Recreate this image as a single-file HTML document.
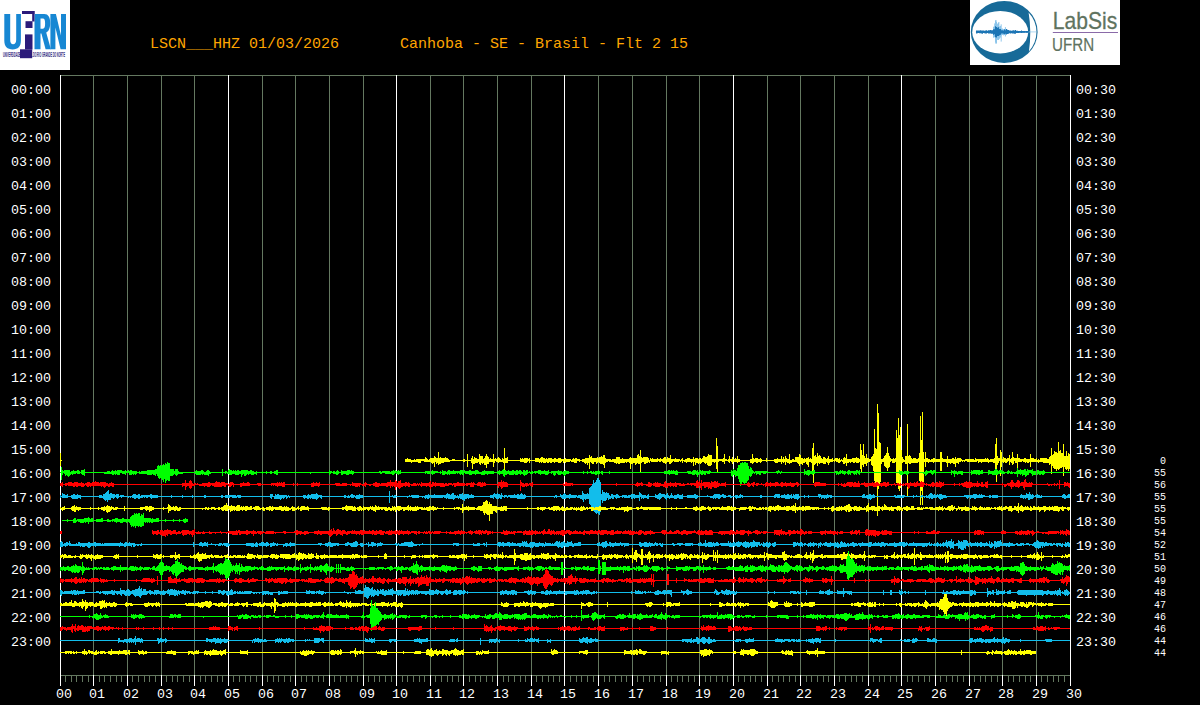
<!DOCTYPE html>
<html lang="en">
<head>
<meta charset="utf-8">
<title>LSCN HHZ helicorder</title>
<style>
html,body{margin:0;padding:0;background:#000;}
body{width:1200px;height:705px;overflow:hidden;font-family:"Liberation Sans",sans-serif;}
svg{display:block;position:absolute;left:0;top:0;}
.tl span{position:absolute;white-space:pre;line-height:1.15;color:transparent;}
</style>
</head>
<body>
<svg role="img" aria-label="Helicorder LSCN HHZ 01/03/2026 - Canhoba - SE - Brasil" width="1200" height="705" viewBox="0 0 1200 705" shape-rendering="crispEdges">
<rect x="0" y="0" width="1200" height="705" fill="#000000"/>
<rect x="60" y="75" width="1011" height="1" fill="#647860"/>
<rect x="60" y="675" width="1011" height="1" fill="#647860"/>
<rect x="65" y="675" width="1" height="7" fill="#647860"/>
<rect x="71" y="675" width="1" height="7" fill="#647860"/>
<rect x="76" y="675" width="1" height="7" fill="#647860"/>
<rect x="82" y="675" width="1" height="7" fill="#647860"/>
<rect x="88" y="675" width="1" height="7" fill="#647860"/>
<rect x="99" y="675" width="1" height="7" fill="#647860"/>
<rect x="104" y="675" width="1" height="7" fill="#647860"/>
<rect x="110" y="675" width="1" height="7" fill="#647860"/>
<rect x="116" y="675" width="1" height="7" fill="#647860"/>
<rect x="121" y="675" width="1" height="7" fill="#647860"/>
<rect x="132" y="675" width="1" height="7" fill="#647860"/>
<rect x="138" y="675" width="1" height="7" fill="#647860"/>
<rect x="144" y="675" width="1" height="7" fill="#647860"/>
<rect x="149" y="675" width="1" height="7" fill="#647860"/>
<rect x="155" y="675" width="1" height="7" fill="#647860"/>
<rect x="166" y="675" width="1" height="7" fill="#647860"/>
<rect x="172" y="675" width="1" height="7" fill="#647860"/>
<rect x="177" y="675" width="1" height="7" fill="#647860"/>
<rect x="183" y="675" width="1" height="7" fill="#647860"/>
<rect x="189" y="675" width="1" height="7" fill="#647860"/>
<rect x="200" y="675" width="1" height="7" fill="#647860"/>
<rect x="205" y="675" width="1" height="7" fill="#647860"/>
<rect x="211" y="675" width="1" height="7" fill="#647860"/>
<rect x="217" y="675" width="1" height="7" fill="#647860"/>
<rect x="222" y="675" width="1" height="7" fill="#647860"/>
<rect x="233" y="675" width="1" height="7" fill="#647860"/>
<rect x="239" y="675" width="1" height="7" fill="#647860"/>
<rect x="245" y="675" width="1" height="7" fill="#647860"/>
<rect x="250" y="675" width="1" height="7" fill="#647860"/>
<rect x="256" y="675" width="1" height="7" fill="#647860"/>
<rect x="267" y="675" width="1" height="7" fill="#647860"/>
<rect x="273" y="675" width="1" height="7" fill="#647860"/>
<rect x="278" y="675" width="1" height="7" fill="#647860"/>
<rect x="284" y="675" width="1" height="7" fill="#647860"/>
<rect x="290" y="675" width="1" height="7" fill="#647860"/>
<rect x="301" y="675" width="1" height="7" fill="#647860"/>
<rect x="306" y="675" width="1" height="7" fill="#647860"/>
<rect x="312" y="675" width="1" height="7" fill="#647860"/>
<rect x="318" y="675" width="1" height="7" fill="#647860"/>
<rect x="323" y="675" width="1" height="7" fill="#647860"/>
<rect x="334" y="675" width="1" height="7" fill="#647860"/>
<rect x="340" y="675" width="1" height="7" fill="#647860"/>
<rect x="346" y="675" width="1" height="7" fill="#647860"/>
<rect x="351" y="675" width="1" height="7" fill="#647860"/>
<rect x="357" y="675" width="1" height="7" fill="#647860"/>
<rect x="368" y="675" width="1" height="7" fill="#647860"/>
<rect x="374" y="675" width="1" height="7" fill="#647860"/>
<rect x="379" y="675" width="1" height="7" fill="#647860"/>
<rect x="385" y="675" width="1" height="7" fill="#647860"/>
<rect x="391" y="675" width="1" height="7" fill="#647860"/>
<rect x="402" y="675" width="1" height="7" fill="#647860"/>
<rect x="407" y="675" width="1" height="7" fill="#647860"/>
<rect x="413" y="675" width="1" height="7" fill="#647860"/>
<rect x="419" y="675" width="1" height="7" fill="#647860"/>
<rect x="424" y="675" width="1" height="7" fill="#647860"/>
<rect x="435" y="675" width="1" height="7" fill="#647860"/>
<rect x="441" y="675" width="1" height="7" fill="#647860"/>
<rect x="447" y="675" width="1" height="7" fill="#647860"/>
<rect x="452" y="675" width="1" height="7" fill="#647860"/>
<rect x="458" y="675" width="1" height="7" fill="#647860"/>
<rect x="469" y="675" width="1" height="7" fill="#647860"/>
<rect x="475" y="675" width="1" height="7" fill="#647860"/>
<rect x="480" y="675" width="1" height="7" fill="#647860"/>
<rect x="486" y="675" width="1" height="7" fill="#647860"/>
<rect x="492" y="675" width="1" height="7" fill="#647860"/>
<rect x="503" y="675" width="1" height="7" fill="#647860"/>
<rect x="508" y="675" width="1" height="7" fill="#647860"/>
<rect x="514" y="675" width="1" height="7" fill="#647860"/>
<rect x="520" y="675" width="1" height="7" fill="#647860"/>
<rect x="525" y="675" width="1" height="7" fill="#647860"/>
<rect x="536" y="675" width="1" height="7" fill="#647860"/>
<rect x="542" y="675" width="1" height="7" fill="#647860"/>
<rect x="548" y="675" width="1" height="7" fill="#647860"/>
<rect x="553" y="675" width="1" height="7" fill="#647860"/>
<rect x="559" y="675" width="1" height="7" fill="#647860"/>
<rect x="570" y="675" width="1" height="7" fill="#647860"/>
<rect x="576" y="675" width="1" height="7" fill="#647860"/>
<rect x="581" y="675" width="1" height="7" fill="#647860"/>
<rect x="587" y="675" width="1" height="7" fill="#647860"/>
<rect x="593" y="675" width="1" height="7" fill="#647860"/>
<rect x="604" y="675" width="1" height="7" fill="#647860"/>
<rect x="609" y="675" width="1" height="7" fill="#647860"/>
<rect x="615" y="675" width="1" height="7" fill="#647860"/>
<rect x="621" y="675" width="1" height="7" fill="#647860"/>
<rect x="626" y="675" width="1" height="7" fill="#647860"/>
<rect x="637" y="675" width="1" height="7" fill="#647860"/>
<rect x="643" y="675" width="1" height="7" fill="#647860"/>
<rect x="649" y="675" width="1" height="7" fill="#647860"/>
<rect x="654" y="675" width="1" height="7" fill="#647860"/>
<rect x="660" y="675" width="1" height="7" fill="#647860"/>
<rect x="671" y="675" width="1" height="7" fill="#647860"/>
<rect x="677" y="675" width="1" height="7" fill="#647860"/>
<rect x="682" y="675" width="1" height="7" fill="#647860"/>
<rect x="688" y="675" width="1" height="7" fill="#647860"/>
<rect x="694" y="675" width="1" height="7" fill="#647860"/>
<rect x="705" y="675" width="1" height="7" fill="#647860"/>
<rect x="710" y="675" width="1" height="7" fill="#647860"/>
<rect x="716" y="675" width="1" height="7" fill="#647860"/>
<rect x="722" y="675" width="1" height="7" fill="#647860"/>
<rect x="727" y="675" width="1" height="7" fill="#647860"/>
<rect x="738" y="675" width="1" height="7" fill="#647860"/>
<rect x="744" y="675" width="1" height="7" fill="#647860"/>
<rect x="750" y="675" width="1" height="7" fill="#647860"/>
<rect x="755" y="675" width="1" height="7" fill="#647860"/>
<rect x="761" y="675" width="1" height="7" fill="#647860"/>
<rect x="772" y="675" width="1" height="7" fill="#647860"/>
<rect x="778" y="675" width="1" height="7" fill="#647860"/>
<rect x="783" y="675" width="1" height="7" fill="#647860"/>
<rect x="789" y="675" width="1" height="7" fill="#647860"/>
<rect x="795" y="675" width="1" height="7" fill="#647860"/>
<rect x="806" y="675" width="1" height="7" fill="#647860"/>
<rect x="811" y="675" width="1" height="7" fill="#647860"/>
<rect x="817" y="675" width="1" height="7" fill="#647860"/>
<rect x="823" y="675" width="1" height="7" fill="#647860"/>
<rect x="828" y="675" width="1" height="7" fill="#647860"/>
<rect x="839" y="675" width="1" height="7" fill="#647860"/>
<rect x="845" y="675" width="1" height="7" fill="#647860"/>
<rect x="851" y="675" width="1" height="7" fill="#647860"/>
<rect x="856" y="675" width="1" height="7" fill="#647860"/>
<rect x="862" y="675" width="1" height="7" fill="#647860"/>
<rect x="873" y="675" width="1" height="7" fill="#647860"/>
<rect x="879" y="675" width="1" height="7" fill="#647860"/>
<rect x="884" y="675" width="1" height="7" fill="#647860"/>
<rect x="890" y="675" width="1" height="7" fill="#647860"/>
<rect x="896" y="675" width="1" height="7" fill="#647860"/>
<rect x="907" y="675" width="1" height="7" fill="#647860"/>
<rect x="912" y="675" width="1" height="7" fill="#647860"/>
<rect x="918" y="675" width="1" height="7" fill="#647860"/>
<rect x="924" y="675" width="1" height="7" fill="#647860"/>
<rect x="929" y="675" width="1" height="7" fill="#647860"/>
<rect x="940" y="675" width="1" height="7" fill="#647860"/>
<rect x="946" y="675" width="1" height="7" fill="#647860"/>
<rect x="952" y="675" width="1" height="7" fill="#647860"/>
<rect x="957" y="675" width="1" height="7" fill="#647860"/>
<rect x="963" y="675" width="1" height="7" fill="#647860"/>
<rect x="974" y="675" width="1" height="7" fill="#647860"/>
<rect x="980" y="675" width="1" height="7" fill="#647860"/>
<rect x="985" y="675" width="1" height="7" fill="#647860"/>
<rect x="991" y="675" width="1" height="7" fill="#647860"/>
<rect x="997" y="675" width="1" height="7" fill="#647860"/>
<rect x="1008" y="675" width="1" height="7" fill="#647860"/>
<rect x="1013" y="675" width="1" height="7" fill="#647860"/>
<rect x="1019" y="675" width="1" height="7" fill="#647860"/>
<rect x="1025" y="675" width="1" height="7" fill="#647860"/>
<rect x="1030" y="675" width="1" height="7" fill="#647860"/>
<rect x="1041" y="675" width="1" height="7" fill="#647860"/>
<rect x="1047" y="675" width="1" height="7" fill="#647860"/>
<rect x="1053" y="675" width="1" height="7" fill="#647860"/>
<rect x="1058" y="675" width="1" height="7" fill="#647860"/>
<rect x="1064" y="675" width="1" height="7" fill="#647860"/>
<rect x="60" y="75" width="1" height="600" fill="#ffffff"/>
<rect x="60" y="675" width="1" height="11" fill="#ffffff"/>
<rect x="93" y="75" width="1" height="600" fill="#647860"/>
<rect x="93" y="675" width="1" height="11" fill="#ffffff"/>
<rect x="127" y="75" width="1" height="600" fill="#647860"/>
<rect x="127" y="675" width="1" height="11" fill="#ffffff"/>
<rect x="161" y="75" width="1" height="600" fill="#647860"/>
<rect x="161" y="675" width="1" height="11" fill="#ffffff"/>
<rect x="194" y="75" width="1" height="600" fill="#647860"/>
<rect x="194" y="675" width="1" height="11" fill="#ffffff"/>
<rect x="228" y="75" width="1" height="600" fill="#ffffff"/>
<rect x="228" y="675" width="1" height="11" fill="#ffffff"/>
<rect x="262" y="75" width="1" height="600" fill="#647860"/>
<rect x="262" y="675" width="1" height="11" fill="#ffffff"/>
<rect x="295" y="75" width="1" height="600" fill="#647860"/>
<rect x="295" y="675" width="1" height="11" fill="#ffffff"/>
<rect x="329" y="75" width="1" height="600" fill="#647860"/>
<rect x="329" y="675" width="1" height="11" fill="#ffffff"/>
<rect x="363" y="75" width="1" height="600" fill="#647860"/>
<rect x="363" y="675" width="1" height="11" fill="#ffffff"/>
<rect x="396" y="75" width="1" height="600" fill="#ffffff"/>
<rect x="396" y="675" width="1" height="11" fill="#ffffff"/>
<rect x="430" y="75" width="1" height="600" fill="#647860"/>
<rect x="430" y="675" width="1" height="11" fill="#ffffff"/>
<rect x="463" y="75" width="1" height="600" fill="#647860"/>
<rect x="463" y="675" width="1" height="11" fill="#ffffff"/>
<rect x="497" y="75" width="1" height="600" fill="#647860"/>
<rect x="497" y="675" width="1" height="11" fill="#ffffff"/>
<rect x="531" y="75" width="1" height="600" fill="#647860"/>
<rect x="531" y="675" width="1" height="11" fill="#ffffff"/>
<rect x="564" y="75" width="1" height="600" fill="#ffffff"/>
<rect x="564" y="675" width="1" height="11" fill="#ffffff"/>
<rect x="598" y="75" width="1" height="600" fill="#647860"/>
<rect x="598" y="675" width="1" height="11" fill="#ffffff"/>
<rect x="632" y="75" width="1" height="600" fill="#647860"/>
<rect x="632" y="675" width="1" height="11" fill="#ffffff"/>
<rect x="666" y="75" width="1" height="600" fill="#647860"/>
<rect x="666" y="675" width="1" height="11" fill="#ffffff"/>
<rect x="699" y="75" width="1" height="600" fill="#647860"/>
<rect x="699" y="675" width="1" height="11" fill="#ffffff"/>
<rect x="733" y="75" width="1" height="600" fill="#ffffff"/>
<rect x="733" y="675" width="1" height="11" fill="#ffffff"/>
<rect x="767" y="75" width="1" height="600" fill="#647860"/>
<rect x="767" y="675" width="1" height="11" fill="#ffffff"/>
<rect x="800" y="75" width="1" height="600" fill="#647860"/>
<rect x="800" y="675" width="1" height="11" fill="#ffffff"/>
<rect x="834" y="75" width="1" height="600" fill="#647860"/>
<rect x="834" y="675" width="1" height="11" fill="#ffffff"/>
<rect x="868" y="75" width="1" height="600" fill="#647860"/>
<rect x="868" y="675" width="1" height="11" fill="#ffffff"/>
<rect x="901" y="75" width="1" height="600" fill="#ffffff"/>
<rect x="901" y="675" width="1" height="11" fill="#ffffff"/>
<rect x="935" y="75" width="1" height="600" fill="#647860"/>
<rect x="935" y="675" width="1" height="11" fill="#ffffff"/>
<rect x="969" y="75" width="1" height="600" fill="#647860"/>
<rect x="969" y="675" width="1" height="11" fill="#ffffff"/>
<rect x="1002" y="75" width="1" height="600" fill="#647860"/>
<rect x="1002" y="675" width="1" height="11" fill="#ffffff"/>
<rect x="1036" y="75" width="1" height="600" fill="#647860"/>
<rect x="1036" y="675" width="1" height="11" fill="#ffffff"/>
<rect x="1070" y="75" width="1" height="600" fill="#ffffff"/>
<rect x="1070" y="675" width="1" height="11" fill="#ffffff"/>
<path fill="#ffff00" d="M405 460h665v1h-665zM405 460v-1h2v-1h1v1h3v1h3v-1h1v1h1v-1h9v-2h1v1h1v1h1v1h1v-1h1v-1h4v-2h1v1h1v1h2v-6h1v6h1v-1h1v1h4v-1h1v1h2v1h1v1h1v2h-6v1h-3v1h-2v1h-1v-2h-1v1h-1v-2h-1v5h-1v-4h-1v1h-1v-1h-1v-1h-7v-1h-3v2h-3v-1h-6v1h-1v-1h-6zM452 460v-1h3v2h-3zM463 460v-1h2v3h-2zM467 460v-6h1v13h-1zM471 460v-2h1v-2h1v3h1v-2h1v1h2v1h2v-5h1v2h3v3h1v-1h1v-2h1v-2h1v2h1v1h1v2h1v-1h1v1h2v-5h1v5h1v-1h1v1h1v-1h1v-1h1v1h1v1h1v1h1v-2h1v1h1v-11h1v10h2v-1h1v6h-3v7h-1v-7h-1v-1h-4v1h-1v-1h-2v-1h-1v2h-1v4h-1v-5h-4v2h-2v4h-1v-3h-2v-2h-1v1h-1v-1h-1v2h-1v-1h-1v-2h-1v1h-3v1h-2v5h-1v-6h-1zM520 460v-2h1v1h1v-1h1v1h1v-1h4v1h1v-1h1v5h-1v-2h-1v1h-1v1h-3v-1h-4zM535 460v-2h4v1h1v-1h1v-1h2v1h2v1h1v-1h1v1h1v-1h4v1h2v-1h2v1h2v-1h3v1h4v-1h1v1h5v1h1v-1h1v-1h1v1h1v-1h2v1h3v3h-1v-1h-2v2h-3v-1h-3v-1h-1v1h-4v1h-1v-1h-1v1h-1v-2h-1v1h-1v1h-3v-1h-3v1h-1v-1h-2v1h-2v-1h-1v1h-2v-1h-1v1h-3v-1h-1v1h-1v-1h-1v1h-1v-1h-4zM582 460v-1h3v-1h4v-3h1v2h1v-1h1v2h5v-1h1v1h1v-1h2v-1h1v1h1v-2h2v3h1v1h5v1h1v-1h4v-2h4v2h2v-1h1v1h6v-1h1v-1h1v1h6v-3h1v-1h1v2h1v-6h1v7h1v1h1v-1h5v1h1v2h1v-2h1v1h1v-1h1v1h4v-1h1v1h2v-1h1v1h2v-1h1v-1h2v2h1v-2h1v1h2v-3h1v4h4v-1h1v1h4v1h1v-1h1v-1h1v5h-1v-2h-1v1h-1v-1h-1v1h-5v-1h-1v1h-1v1h-1v1h-2v-2h-2v1h-1v1h-1v-1h-2v-1h-1v-1h-1v1h-2v-1h-1v1h-7v-1h-1v2h-1v-1h-1v1h-2v1h-2v-2h-2v1h-1v9h-1v-8h-2v-1h-1v1h-1v1h-1v-2h-2v1h-2v5h-1v-6h-1v-1h-2v1h-1v-1h-1v1h-5v1h-2v-1h-1v1h-1v-1h-2v-1h-5v-1h-1v1h-2v1h-1v5h-1v-3h-1v-1h-3v-1h-1v-1h-1v1h-1v1h-1v-2h-2v2h-2v-1h-1v-1h-1v7h-1v-6h-1v2h-1v-2h-1v1h-1v-1h-1v-1h-2zM684 460h1v-1h2v-1h3v1h3v-2h1v2h1v-1h3v1h1v-1h2v1h1v-1h1v-2h2v1h2v-1h1v-2h1v1h3v4h4v-21h1v8h1v13h5v-1h1v-4h1v5h2v2h-2v3h-1v-2h-2v-1h-3v1h-1v11h-1v-4h-1v-7h-1v1h-1v-1h-2v3h-1v1h-3v-1h-1v-2h-1v1h-1v-1h-1v-1h-2v1h-1v1h-1v-1h-1v1h-1v-1h-2v2h-1v-3h-1v4h-1v-4h-1v1h-1v-1h-4v1h-1v-1h-2zM728 460v-1h1v-3h1v3h2v-2h1v2h2v-1h1v1h1v-3h1v3h2v3h-2v1h-1v-1h-4v2h-1v-2h-1v-1h-1v2h-1v-1h-1zM750 460v-1h2v-5h1v4h1v1h1v-1h3v1h2v-1h1v1h1v3h-1v1h-1v-1h-2v1h-2v-1h-2v1h-1v1h-1v-1h-2zM766 460v-2h1v4h-1zM774 460v-1h3v-1h1v1h3v-3h1v3h1v-2h1v2h1v-3h1v2h1v1h2v-5h1v6h2v-1h2v1h1v-3h4v-3h1v1h1v3h2v1h1v-1h1v1h1v-1h2v-1h1v2h1v-1h1v1h1v-11h1v-5h1v13h1v-1h1v2h1v-4h1v3h1v-1h1v1h1v2h1v1h1v-2h2v1h1v1h1v-1h1v-2h1v3h3v-1h1v4h-3v1h-1v2h-1v-2h-1v-1h-1v2h-3v-1h-3v1h-1v-1h-1v3h-1v-3h-1v1h-1v1h-1v18h-1v-12h-1v-8h-1v-1h-2v5h-1v-2h-1v-1h-1v-2h-1v1h-2v2h-1v-1h-2v2h-1v-2h-1v-1h-1v-1h-5v1h-2v1h-1v-1h-2v-1h-1v3h-1v-3h-1v1h-1v-1h-1v2h-1v-2h-3v1h-3v-1h-1zM834 460v-1h1v-1h3v1h1v-1h1v2h1v-1h1v1h1v-2h1v-1h1v1h1v-4h1v5h5v-1h4v-1h1v1h2v1h1v-15h1v6h1v5h1v-11h1v12h1v2h1v-4h1v4h2v1h2v-2h1v-1h1v-2h1v-25h1v19h1v1h1v-45h1v9h1v29h1v1h1v16h2v-1h1v-2h1v-1h1v-2h1v-6h1v6h1v3h1v2h1v1h2v-1h1v1h1v-1h1v-28h1v8h1v-20h1v17h1v-8h1v23h1v7h1v2h1v1h1v-4h2v-32h1v32h1v-1h1v1h1v2h1v1h1v-1h3v1h2v-1h1v-5h1v-37h1v24h1v-28h1v40h1v7h1v-7h1v6h2v1h2v1h1v-1h2v-1h2v1h5v-7h2v6h1v1h4v-3h1v3h4v-1h2v1h1v-2h1v2h1v-1h4v1h1v1h1v2h-1v-1h-1v1h-2v2h-1v-1h-2v4h-1v-3h-2v-1h-2v1h-1v-1h-2v4h-1v-4h-1v-1h-4v9h-2v-9h-6v1h-1v-1h-4v1h-1v-1h-2v5h-1v-5h-1v21h-1v22h-1v-14h-1v14h-1v-24h-1v-19h-1v1h-7v1h-2v-1h-1v33h-1v-32h-2v-2h-2v1h-1v8h-1v17h-1v3h-1v-2h-1v-4h-1v-2h-1v-21h-1v1h-3v-2h-1v1h-1v5h-1v1h-1v3h-1v-3h-1v-1h-1v-1h-1v-4h-2v2h-1v18h-1v2h-1v5h-1v27h-1v-33h-1v2h-1v-4h-1v-10h-1v-5h-1v-1h-1v-4h-1v1h-2v1h-1v3h-1v-2h-2v3h-1v-2h-1v8h-1v-4h-1v-7h-1v1h-3v-1h-1v1h-2v-1h-2v1h-1v-1h-1v1h-2v3h-1v-3h-1v1h-2v-2h-1v-1h-1v1h-1v1h-2v-1h-2v-1h-1v1h-1zM964 460h1v-1h9v1h1v-2h1v1h9v-1h1v1h1v-1h1v1h1v1h1v-1h4v-1h1v-14h1v-6h1v18h1v2h2v-8h1v2h1v7h1v-2h1v1h2v1h1v-1h2v-3h1v4h1v-1h1v-6h1v5h1v1h3v-4h1v4h2v1h4v-1h2v1h4v-5h1v4h3v1h2v-1h1v2h1v-1h1v1h1v-2h7v1h2v-2h1v-1h1v-8h1v7h1v-1h1v-3h1v1h2v1h1v-11h1v9h1v-1h1v3h2v-9h1v12h2v-5h1v5h1v-3h1v1h1v15h-1v2h-1v-2h-1v1h-1v-1h-1v-2h-1v9h-1v-9h-1v1h-2v1h-1v1h-1v-1h-1v2h-1v-2h-2v-1h-1v-2h-1v8h-1v-10h-1v1h-1v-2h-6v-1h-4v1h-1v-1h-7v5h-1v-5h-1v1h-2v-1h-1v1h-1v-1h-2v-1h-1v1h-4v9h-1v-8h-2v-2h-1v3h-1v1h-1v-2h-1v-1h-1v3h-1v-4h-1v1h-1v1h-2v-1h-1v1h-1v-1h-1v5h-1v9h-1v-15h-1v2h-1v2h-1v17h-1v-9h-1v-10h-2v-1h-4v1h-1v-1h-6v1h-1v-1h-2v1h-1v-2h-1v1h-10v-1h-2v1h-1z"/>
<path fill="#00ff00" d="M60 472h1010v1h-1010zM61 472v-5h1v3h1v1h1v-1h6v2h1v-1h2v-1h1v1h3v-1h2v1h1v3h-3v-1h-1v1h-3v1h-1v-1h-1v1h-1v1h-1v1h-1v-1h-1v-1h-1v1h-1v-2h-1v-1h-1v2h-1v5h-1zM81 472v-2h3v-1h1v7h-1v-1h-2v-1h-1zM104 472h3v-1h3v1h1v-1h1v-1h1v1h2v-1h1v1h1v-1h5v1h3v-1h1v1h2v-1h1v1h1v-1h2v1h5v3h-1v1h-1v-1h-1v1h-1v-1h-1v1h-3v-2h-3v2h-1v-1h-3v-1h-2v2h-3v-1h-1v1h-1v-1h-1v1h-2v-1h-8zM139 472v-1h1v1h1v-1h6v-1h8v-1h2v-3h1v-1h1v1h1v-1h1v1h1v-1h1v-1h1v1h1v-2h1v1h1v-2h1v1h2v6h4v2h1v-2h3v2h1v1h4v2h-5v1h-1v1h-1v-1h-1v-1h-1v1h-1v1h-3v5h-2v-1h-1v1h-1v2h-1v-4h-1v3h-1v-2h-1v-1h-1v-1h-1v1h-1v-1h-1v-2h-1v-2h-1v2h-1v-1h-2v-1h-1v1h-5v-1h-8zM195 472v-1h1v-1h1v1h4v-1h2v1h1v1h2v-1h1v-1h2v1h1v1h1v2h-2v2h-1v-1h-4v-1h-1v1h-1v-1h-1v1h-5v-1h-1zM222 472v-3h1v7h-1zM225 472v-1h2v1h1v-2h1v-1h1v1h2v1h1v-1h1v1h1v-1h1v1h1v-1h2v1h2v-1h7v1h2v-1h2v1h2v1h2v-1h1v4h-1v-1h-2v1h-3v-1h-2v1h-1v-1h-1v1h-1v1h-2v-2h-1v1h-1v2h-1v-3h-2v1h-4v-1h-3v1h-3v-1h-2v-1h-1v1h-1zM262 472v-1h1v3h-1zM266 472v-1h1v3h-1zM270 472v-1h2v3h-2zM274 472v-1h2v-1h2v5h-2v-1h-2zM310 472h1v2h-1zM329 472v-2h1v1h2v2h-1v1h-1v1h-1zM333 472v-1h2v1h1v-1h1v-1h1v1h1v3h-1v1h-2v-1h-3zM341 472v-2h1v1h5v-1h3v1h1v-1h1v1h2v3h-1v1h-1v-1h-3v1h-3v-1h-3v1h-2zM379 472v-1h2v1h1v-1h8v1h1v-1h2v-1h1v1h1v-1h1v1h2v-1h1v1h1v-1h1v4h-2v1h-1v-1h-2v-1h-1v1h-1v1h-2v-1h-7v-1h-3v1h-2v-1h-1zM425 472v-1h5v3h-3v-1h-1v1h-1zM431 472v-1h1v-1h1v1h5v2h-3v1h-2v1h-1v-1h-1zM440 472v-1h1v3h-1zM442 472v-2h1v1h3v1h1v-1h1v-1h2v1h3v-1h1v1h6v-1h3v1h1v-1h1v1h4v-1h2v1h4v-1h3v1h1v1h3v-1h2v-1h1v1h9v3h-6v1h-1v-1h-2v1h-4v-1h-5v1h-1v-1h-3v1h-3v-1h-4v-1h-1v2h-2v-1h-1v1h-1v-1h-1v-1h-1v1h-1v-1h-1v1h-6v1h-1v-1h-1v1h-1v-1h-2v1h-3zM497 472v-1h2v-1h1v1h2v-1h1v-1h1v1h2v1h2v-1h1v1h3v-1h2v1h2v-1h2v1h1v-1h2v1h1v1h1v-2h2v1h1v-1h2v4h-1v1h-2v1h-1v-1h-1v-1h-2v1h-1v-1h-2v1h-3v-1h-1v1h-5v-1h-2v1h-2v2h-1v-1h-1v-2h-3v1h-1v-1h-2zM529 472v-1h1v1h1v-1h2v3h-3v-1h-1zM534 472v-1h4v-1h3v1h3v-1h1v1h3v-1h1v4h-1v1h-3v-1h-4v1h-1v-1h-2v-1h-2v1h-1v-1h-1zM551 472v-1h7v-1h1v1h3v1h1v-1h2v-1h1v1h3v3h-3v1h-1v1h-1v-1h-1v-1h-2v1h-3v-1h-1v-1h-1v2h-1v1h-1v-1h-1v-2h-1v1h-1zM583 472v-1h1v3h-1zM587 472v-1h1v3h-1zM590 472v-1h2v1h1v-1h1v1h1v-1h3v-1h1v1h1v3h-1v1h-1v-1h-1v1h-2v-1h-4v-1h-1zM601 472v-1h2v4h-1v-1h-1zM609 472v-1h1v3h-1zM664 472v-1h4v-1h2v1h1v-1h1v1h1v-1h1v1h2v-1h1v1h1v4h-3v-1h-5v1h-1v-1h-5zM687 472v-1h4v1h1v-1h1v-1h3v1h1v-1h1v2h1v-2h2v1h1v-1h1v1h6v-1h1v1h1v2h-1v1h-3v-1h-1v2h-2v-1h-1v1h-2v-1h-2v1h-1v2h-1v-2h-1v-1h-1v1h-3v-1h-4v-1h-1zM731 472v-2h1v1h1v-2h1v1h2v1h1v-3h1v-3h2v-2h2v-1h1v1h1v-1h2v1h2v3h1v3h1v-2h1v1h1v2h1v1h1v1h1v-1h13v2h-2v1h-3v-1h-2v2h-2v-1h-2v1h-1v-2h-1v1h-1v-1h-1v1h-1v2h-1v1h-1v-1h-1v4h-1v1h-1v2h-2v1h-1v-1h-1v-1h-1v2h-1v2h-1v-4h-1v-3h-1v-3h-2v1h-1v-2h-2v2h-1v-1h-1zM776 472v-1h2v-1h1v1h1v1h1v-1h1v2h-1v1h-1v-1h-2v1h-1v-1h-1zM804 472v-3h1v2h2v-1h3v1h3v-1h2v4h-2v1h-1v-1h-2v1h-1v1h-1v-1h-2v-1h-1v1h-1zM835 472v-1h3v1h1v-1h1v-1h1v1h1v-1h1v1h3v3h-1v1h-1v-1h-2v-1h-1v1h-2v1h-1v-1h-1v1h-1v-2h-1zM847 472v-1h1v-1h2v1h6v-1h2v1h1v-1h1v5h-1v-1h-1v-1h-1v2h-1v-1h-1v1h-1v-1h-1v-1h-2v2h-1v-1h-1v1h-1v-1h-1zM899 472v-2h1v1h3v1h1v-1h5v3h-1v1h-2v-1h-3v1h-3v-1h-1zM923 472h2v-1h1v-1h1v1h3v-1h2v1h1v-1h3v5h-1v-2h-1v1h-1v1h-1v-1h-1v-1h-3v1h-1v1h-1v1h-1v-2h-2zM951 472v-2h1v1h2v-1h1v1h2v1h1v-1h5v4h-2v-1h-3v1h-1v-1h-2v3h-1v-3h-1v-1h-1v2h-1zM971 472v-2h1v1h1v-1h7v1h1v-1h2v4h-3v1h-2v-1h-1v1h-1v-1h-4v1h-1zM988 472v-2h2v1h4v-1h1v-1h2v1h1v1h1v-1h3v1h2v1h1v2h-4v-1h-1v1h-2v1h-6v-1h-3v1h-1zM1007 472v-1h1v-1h1v1h1v1h1v-1h1v1h1v2h-3v-1h-1v1h-2zM1014 472h2v-1h1v-3h1v2h2v-1h1v1h3v-1h2v2h1v-2h1v1h4v-1h1v2h3v4h-3v1h-1v-2h-1v-1h-2v2h-2v1h-1v1h-1v-2h-2v1h-1v-2h-1v1h-1v-1h-2v3h-1v-3h-3zM1037 472v-2h2v1h4v-1h1v1h1v3h-1v1h-2v-1h-1v1h-2v-1h-1v1h-1z"/>
<path fill="#ff0000" d="M60 484h1010v1h-1010zM60 484v-1h2v-1h1v5h-1v-1h-2zM65 484v-1h3v-1h4v1h2v-1h4v1h3v-1h1v1h2v1h1v-1h2v-1h3v1h2v-1h3v-1h1v1h3v1h1v-1h6v1h2v1h1v-1h2v-1h1v1h2v4h-2v-1h-2v1h-2v-1h-2v1h-1v1h-1v-1h-1v-1h-1v1h-1v-1h-7v1h-1v-1h-2v1h-1v-1h-1v1h-2v-1h-1v-1h-1v1h-1v1h-3v-1h-3v1h-2v-1h-1v1h-2v-1h-5v-1h-1v1h-2zM182 484v-1h3v-3h1v3h3v-2h1v-1h1v1h1v2h1v1h1v-1h2v2h-1v1h-3v2h-1v1h-1v-1h-1v-2h-2v1h-1v3h-1v-4h-2v1h-1zM197 484v-1h1v2h-1zM199 484h3v-1h6v-1h2v1h5v-1h1v-1h1v1h3v1h1v-1h4v1h3v1h1v-1h1v-1h3v1h1v4h-1v-2h-1v1h-1v1h-2v-1h-1v-1h-2v2h-2v-1h-2v1h-8v-1h-2v-1h-1v1h-1v1h-3v-1h-2v1h-1v-1h-5zM240 484v-1h3v-1h1v1h3v-1h2v1h1v3h-8v1h-2zM257 484v-1h4v3h-3v-1h-1zM271 484v-1h6v-1h1v1h1v-1h1v1h1v-1h1v1h1v-1h2v5h-3v-1h-4v1h-1v-1h-2v-1h-1v1h-1v-1h-1v1h-1zM293 484v-1h1v3h-1zM297 484v-1h1v3h-1zM311 484v-1h2v-1h1v1h2v-1h1v1h2v-1h1v4h-1v1h-1v-1h-4v1h-3zM335 484v-1h5v1h2v-1h5v3h-11v-1h-1zM350 484h1v2h-1zM352 484v-2h1v1h8v2h-1v2h-1v-1h-1v1h-3v-1h-3zM362 484h2v-1h1v-1h1v1h1v2h-1v2h-1v-1h-3zM369 484h2v2h-2zM373 484v-1h2v-1h2v1h3v1h1v-1h6v-1h3v-2h1v2h4v-2h1v1h1v2h1v-2h2v-1h1v3h4v-1h2v1h1v-1h1v1h1v4h-2v-1h-2v1h-1v-1h-2v1h-2v1h-1v1h-1v-1h-1v-1h-2v3h-1v-3h-1v-1h-1v1h-1v-1h-1v2h-1v-2h-2v1h-2v-1h-7v1h-4v-1h-2zM411 484h2v-1h3v1h1v-1h1v1h1v-1h1v1h1v-2h1v1h7v-1h1v-1h1v3h1v-2h2v1h1v-1h1v1h8v1h1v-1h2v1h1v-1h4v1h1v-1h4v-1h2v1h6v3h-9v1h-2v-2h-1v1h-1v-1h-3v1h-4v1h-5v-1h-4v1h-1v-1h-2v1h-2v2h-1v-2h-1v-1h-2v1h-1v-1h-4v1h-1v-1h-1v-1h-1v1h-1v-1h-1v1h-6zM466 484v-1h5v-1h1v1h1v-1h1v1h1v2h-1v2h-4v-2h-2v1h-2zM477 484v-1h1v-1h3v1h1v-1h1v1h1v-1h1v1h1v3h-3v1h-3v-1h-3zM497 484h1v-2h3v-2h1v2h1v-1h1v1h3v1h1v4h-5v1h-1v1h-1v-2h-1v-1h-1v2h-1v-2h-1zM520 484v-4h1v2h1v1h2v1h1v-1h3v1h1v-1h3v-1h1v5h-1v-1h-2v-1h-1v1h-2v1h-1v-1h-1v1h-3v-1h-1v5h-1zM563 484v-1h1v1h1v-2h2v1h6v3h-1v-1h-1v1h-8zM616 484v-1h1v3h-1zM635 484h1v-1h1v-1h1v1h3v-1h1v1h1v3h-2v-1h-1v1h-2v1h-1v-1h-2zM646 484h2v-2h2v1h2v3h-1v1h-3v-1h-2zM653 484v-1h2v-1h1v1h1v-1h1v1h3v1h3v-2h1v-1h1v2h4v-1h1v1h4v-1h1v1h5v1h2v-1h1v1h1v2h-6v-1h-2v2h-2v-1h-1v1h-1v-1h-2v1h-1v-1h-2v2h-1v-1h-1v1h-1v-1h-2v-1h-3v1h-5v-1h-2zM687 484v-1h2v2h-2zM690 484v-1h6v-2h1v-1h1v2h1v-1h1v2h1v-3h1v3h1v-1h7v1h1v-2h1v1h2v-1h2v1h1v-1h1v2h2v1h1v-1h4v-1h1v5h-1v-1h-6v1h-2v1h-3v-1h-2v2h-2v-1h-1v1h-1v-2h-2v1h-2v-2h-2v4h-1v-2h-1v-2h-1v2h-3v-2h-2v-1h-2v1h-1v-1h-1zM747 484v-1h1v-1h1v1h1v1h1v-1h2v-1h2v3h-1v2h-1v-1h-1v-1h-1v1h-1v1h-2v-1h-1zM756 484v-1h3v2h-1v1h-2zM761 484v-1h1v2h-1zM763 484h1v2h-1zM765 484v-1h1v-1h2v1h2v-1h1v1h4v-1h3v1h1v1h1v-1h1v-1h2v1h2v-1h1v1h4v-1h1v1h5v-1h2v1h1v3h-1v1h-1v-2h-2v1h-1v1h-3v-1h-4v1h-1v-1h-3v1h-2v-1h-5v1h-1v-1h-4v1h-1v-1h-2v1h-1v-1h-1v1h-1zM814 484v-1h1v-1h5v1h6v3h-10v1h-1v-1h-1zM838 484v-1h1v3h-1zM841 484v-1h1v1h2v-1h1v1h1v-1h1v-1h6v1h1v-1h2v1h2v-2h1v2h1v4h-7v-1h-1v1h-3v-1h-3v1h-3v-1h-2zM861 484v-1h3v-1h1v1h7v-1h1v1h1v-1h1v1h1v-1h2v1h1v1h1v-1h3v-1h3v1h1v-1h2v4h-2v1h-2v-1h-3v1h-1v-1h-4v1h-4v-1h-5v1h-3v-1h-1v-1h-3zM891 484h1v2h-1zM894 484v-1h1v1h1v2h-1v-1h-1zM897 484v-1h2v1h1v-1h1v3h-3v-1h-1zM902 484h1v-1h1v3h-2zM905 484v-1h5v-1h1v1h3v-1h1v1h1v-1h1v-1h1v2h2v-1h1v-1h1v1h2v1h1v2h-1v2h-4v-1h-3v1h-3v-1h-4v2h-1v1h-1v-2h-1v-2h-1v1h-1zM926 484v-1h1v3h-1zM928 484h3v-1h1v-1h2v1h2v-1h2v1h1v-2h1v1h2v1h1v-1h1v4h-2v1h-1v1h-1v-1h-5v-1h-1v1h-2v-1h-1v1h-1v-1h-2zM954 484v-1h1v3h-1zM959 484v-1h1v3h-1zM961 484v-1h3v-1h2v-1h1v1h2v-1h1v1h2v1h5v-2h1v2h2v1h1v-2h2v2h2v-2h2v-1h1v7h-2v-1h-1v-1h-1v1h-3v-1h-2v1h-3v-1h-1v1h-1v-1h-1v1h-2v1h-5v-1h-3v-1h-1v-1h-1zM1002 484v-1h1v3h-1zM1004 484h3v-1h3v-1h1v-2h2v2h1v1h2v-1h1v-2h2v1h1v2h1v-1h3v-2h1v-1h1v3h1v1h2v-1h1v1h1v-1h1v1h1v2h-1v2h-7v3h-1v-2h-1v-2h-3v1h-1v1h-1v-1h-3v-1h-1v1h-2v2h-1v-2h-1v-1h-2v-1h-1v1h-1v1h-2zM1047 484v-1h1v1h2v2h-2v-1h-1zM1051 484h1v2h-1zM1054 484v-1h1v3h-1zM1056 484h1v-1h1v2h-1v1h-1zM1059 484v-4h1v9h-1zM1064 484v-2h2v1h1v-1h1v1h2v5h-1v-1h-1v-1h-3v1h-1z"/>
<path fill="#12bdeb" d="M60 496h1010v1h-1010zM60 496v-1h1v3h-1zM62 496v-3h1v1h2v1h2v-1h1v4h-6zM71 496v-1h2v-1h2v1h2v-1h1v1h3v4h-1v-1h-2v1h-6v-1h-1zM99 496v-1h3v1h1v-2h2v-1h1v-1h1v-1h1v-1h1v4h1v-1h2v1h3v1h1v-1h3v4h-1v1h-1v-1h-1v-1h-1v1h-1v1h-1v-1h-2v2h-3v2h-1v-2h-1v1h-1v-1h-1v-1h-1v-1h-4zM120 496v-1h4v2h-2v1h-1v-1h-1zM128 496h1v2h-1zM130 496h1v2h-1zM132 496v-1h1v-1h3v1h2v-1h2v2h1v-1h9v-1h2v1h6v3h-6v1h-1v-1h-1v-1h-2v1h-2v-1h-1v1h-1v-1h-1v1h-3v1h-2v-1h-2v1h-2v-1h-2zM171 496v-1h1v3h-1zM182 496v-1h1v3h-1zM192 496v-1h1v3h-1zM204 496v-1h2v3h-2zM221 496v-1h2v3h-2zM225 496v-1h11v1h1v-1h4v3h-3v-1h-1v1h-5v-1h-2v1h-5zM270 496v-2h3v3h-1v2h-1v-1h-1zM274 496h1v-2h1v1h1v-1h2v1h8v1h1v-1h1v1h1v2h-1v-1h-1v1h-1v1h-1v-2h-1v1h-1v1h-1v-1h-1v1h-1v1h-1v-1h-6zM303 496v-1h3v1h1v-1h1v-1h1v1h2v-1h5v-1h1v1h1v1h4v4h-1v-1h-1v-1h-1v1h-1v1h-1v1h-1v-1h-4v-1h-1v1h-1v-1h-1v1h-2v-1h-2v1h-1v-1h-1zM344 496v-1h2v3h-2zM347 496h1v-1h1v1h1v-1h1v-1h2v1h2v1h1v-1h3v-1h1v1h3v3h-3v1h-4v-1h-1v-1h-1v1h-3v-1h-1v1h-3zM389 496v-5h1v12h-1zM392 496v-1h1v1h1v-1h2v3h-3v-1h-1zM407 496h1v2h-1zM409 496v-1h1v2h-1zM411 496v-1h8v3h-7v-1h-1zM422 496h1v2h-1zM424 496h1v-1h3v-1h1v1h5v-1h1v1h11v-1h1v-1h1v1h2v1h1v-1h1v-1h2v2h2v1h1v-1h1v1h1v-2h3v-1h1v2h1v-1h5v1h2v-1h1v1h2v3h-5v1h-1v-1h-1v1h-2v2h-1v-1h-2v-1h-2v-1h-1v1h-1v-1h-3v1h-1v1h-1v-1h-5v-1h-1v1h-1v-1h-2v-1h-1v1h-12v-1h-1v1h-1v1h-2v-1h-1v1h-1v-1h-1zM490 496v-1h3v-1h1v-1h1v1h2v-1h1v1h2v1h1v-2h1v2h1v2h-1v2h-2v-1h-1v1h-3v-1h-1v-1h-1v2h-1v-1h-3zM504 496v-1h3v1h1v-1h6v-1h1v1h2v-1h2v1h1v-1h1v-1h1v1h1v1h1v-1h1v1h1v3h-1v1h-8v-1h-7v-1h-2v1h-1v-1h-2v1h-1zM554 496h1v-1h2v3h-1v-1h-1v1h-1zM560 496v-2h1v1h2v-1h1v-1h1v1h1v1h3v-1h2v1h6v1h1v-1h4v-4h1v2h1v1h3v-1h1v1h1v-6h1v-1h1v-1h1v-2h1v-4h1v3h1v-1h1v-2h1v-2h2v2h1v2h1v12h1v-4h1v2h2v1h1v-1h1v1h2v2h1v1h1v-2h2v1h3v-1h2v1h1v1h1v2h-3v1h-1v-1h-1v-1h-1v2h-2v-1h-1v1h-2v1h-1v-2h-1v2h-1v1h-3v2h-1v-3h-1v12h-1v3h-1v-1h-1v-1h-1v1h-1v-1h-1v-1h-1v-1h-1v-3h-1v-1h-1v-2h-1v-1h-1v-5h-3v1h-1v-1h-1v3h-1v-2h-1v-1h-2v-1h-3v-1h-1v1h-6v1h-1v-1h-3v1h-4v-1h-1v-1h-1zM622 496v-1h5v1h1v-1h3v-1h4v1h4v-3h1v1h1v1h1v1h4v1h1v-1h1v-1h1v5h-2v-1h-3v1h-1v-1h-1v1h-1v-2h-1v4h-1v-3h-4v1h-1v-1h-1v1h-2v-2h-1v1h-6v-1h-1v1h-1zM655 496v-2h1v1h2v-1h1v-1h2v1h4v1h1v-1h1v-1h1v2h1v1h1v-1h1v-2h1v2h1v1h1v-1h3v-1h2v1h3v-1h1v5h-4v-1h-2v1h-3v-1h-4v1h-1v-1h-2v2h-1v-1h-1v-1h-1v-1h-2v1h-1v1h-1v1h-1v-1h-2v-1h-2zM687 496v-1h7v-1h2v1h2v3h-1v1h-2v-1h-8zM707 496v-1h1v2h-1zM710 496h3v-1h1v-1h6v1h2v-1h2v1h2v3h-3v-1h-2v1h-1v1h-2v-1h-2v1h-1v-1h-1v1h-1v-1h-3zM728 496v-1h3v1h1v2h-2v-1h-2zM735 496v-1h3v1h1v-1h1v-1h1v1h2v3h-1v-1h-1v1h-4v1h-1v-1h-1zM760 496v-1h2v3h-2zM774 496v-1h1v-1h5v4h-3v-1h-1v1h-2zM781 496v-1h3v-1h1v1h2v-1h2v1h2v-1h1v2h1v-2h1v1h1v-1h4v2h1v2h-1v1h-1v1h-1v-1h-3v-1h-2v1h-1v-1h-1v1h-5v-1h-4zM804 496v-1h1v3h-1zM808 496v-1h1v3h-1zM818 496v-2h3v1h6v-1h1v1h4v3h-2v-1h-1v1h-2v1h-1v-1h-1v1h-1v-1h-2v1h-1v-2h-1v1h-1v-1h-1zM862 496v-1h1v-1h2v2h1v-1h3v-1h2v1h2v-1h1v1h1v3h-3v1h-1v1h-1v-1h-3v-1h-5zM894 496v-1h2v1h1v-1h4v1h1v-1h3v2h-1v1h-9v-1h-1zM913 496v-1h1v3h-1zM916 496v-1h1v2h-1zM921 496v-1h2v2h-1v1h-1zM924 496h1v2h-1zM926 496v-1h1v1h1v-1h1v-1h1v-1h2v1h1v1h1v-1h1v1h2v-1h1v1h1v-1h3v1h4v1h1v2h-4v1h-2v1h-1v-1h-1v-1h-1v-1h-1v1h-4v1h-2v-1h-1v1h-1v-1h-3zM964 496v-1h9v-1h4v1h2v-1h1v1h1v-1h1v1h3v2h-2v1h-7v1h-2v-1h-3v1h-1v-2h-1v1h-1v1h-1v-1h-1v-1h-2zM989 496v-1h2v3h-2zM992 496v-1h6v3h-6zM1020 496v-1h1v-1h1v1h4v-2h1v1h2v-2h1v2h1v1h1v-1h1v1h1v3h-1v1h-3v1h-2v-2h-2v1h-1v-1h-1v1h-1v-1h-3zM1035 496v-1h2v-1h1v1h2v1h1v-1h1v3h-6v-1h-1zM1062 496v-1h1v-1h2v1h1v1h1v-1h1v-1h2v4h-4v1h-2v-1h-2z"/>
<path fill="#ffff00" d="M60 508h1010v1h-1010zM60 508v-1h1v1h1v-1h2v-1h1v4h-2v1h-1v-1h-1v-1h-1zM71 508v-1h1v-1h2v-1h1v2h1v-1h1v1h4v3h-2v1h-1v-1h-2v2h-2v-1h-2v-1h-1zM90 508v-1h1v3h-1zM98 508v-1h1v3h-1zM101 508v-1h3v-1h1v1h1v-1h1v-1h1v1h2v1h1v-1h1v1h2v1h1v-1h3v2h-1v1h-4v-1h-1v1h-1v1h-1v1h-2v1h-1v-1h-1v-2h-1v1h-2v-1h-2zM124 508v-2h1v5h-1zM140 508v-1h5v-1h3v1h1v-1h3v1h2v3h-2v1h-2v1h-1v-2h-2v1h-1v-1h-1v-1h-2v1h-3zM163 508v-1h1v3h-1zM167 508v-1h1v-3h1v1h1v1h1v1h2v-1h1v1h1v-1h2v1h1v1h1v-1h2v3h-1v1h-3v-1h-1v1h-2v-1h-3v1h-2v2h-1v-4h-1zM202 508h1v2h-1zM205 508v-1h2v1h1v-1h1v3h-2v-1h-1v1h-1zM211 508v-1h4v1h1v2h-2v-1h-2v1h-1zM218 508v-1h2v3h-2zM221 508v-1h2v-1h1v-1h2v-2h1v2h1v1h3v-1h1v1h3v1h1v-1h1v-1h3v2h1v-1h1v1h1v-1h1v1h1v-1h3v1h2v-1h2v4h-5v1h-2v-1h-2v1h-1v-1h-2v1h-4v-1h-1v1h-1v-1h-1v1h-2v1h-1v-2h-1v-1h-1v2h-3v-1h-1v1h-2v-1h-1zM253 508v-1h2v-1h4v1h1v1h1v2h-4v1h-1v-1h-2v-1h-1zM262 508v-1h2v1h1v3h-2v-1h-1zM266 508v-1h3v-1h2v1h1v-1h1v1h6v-1h3v1h2v-1h1v1h1v-1h1v1h2v1h2v-1h1v-1h1v1h2v1h2v-1h1v-1h1v4h-1v-1h-1v1h-2v1h-3v-2h-1v1h-2v1h-4v-1h-1v1h-3v-1h-6v-1h-1v1h-1v1h-2v-1h-1v1h-1v-1h-3zM300 508v-1h1v-1h4v1h2v-1h1v1h1v4h-1v-1h-6v1h-2zM321 508v-1h6v1h1v-1h2v3h-1v1h-1v-1h-6v-1h-1zM342 508v-1h3v-1h1v-1h1v1h6v1h1v-1h1v1h1v4h-4v-1h-4v1h-2v-1h-1v-1h-1v1h-2zM357 508v-1h2v-1h2v1h1v1h1v-2h1v1h6v-1h1v1h1v-1h1v1h2v-2h1v1h1v1h1v-1h1v1h8v1h1v-1h2v1h2v-2h1v1h1v-1h1v1h2v-1h4v1h6v-1h1v-1h1v2h1v-1h1v1h4v-1h1v1h1v-1h1v1h5v1h1v-1h1v1h1v-1h3v-1h2v1h1v-1h2v1h2v1h1v-1h1v2h-1v1h-3v1h-1v-1h-3v1h-3v-1h-6v-1h-2v1h-2v1h-5v-1h-1v1h-1v-1h-1v1h-1v-1h-3v1h-2v-2h-1v1h-2v1h-2v-1h-2v2h-1v-2h-1v1h-1v-1h-1v1h-2v-1h-2v1h-3v-1h-1v-1h-1v1h-2v-1h-1v1h-4v2h-1v-1h-2v-1h-2v-1h-1v1h-1v1h-1v-1h-1v-1h-1v1h-2v1h-1v-1h-1v1h-1v-1h-1v1h-2v-1h-1zM443 508v-1h1v3h-1zM454 508v-1h1v3h-1zM456 508v-1h4v1h2v-4h1v3h3v-1h1v1h1v-1h1v1h6v3h-6v1h-1v-1h-4v1h-1v2h-1v-3h-2v-1h-1v1h-1v-1h-2zM476 508h1v-1h1v-1h4v-1h1v-3h2v-1h1v-1h1v1h1v3h1v-2h1v2h2v2h5v1h4v-1h1v1h1v-1h4v5h-2v-1h-1v1h-4v-1h-3v3h-1v-1h-1v-1h-2v3h-3v7h-1v-6h-2v-1h-1v-1h-1v2h-1v-2h-1v-2h-3v-1h-4zM527 508v-1h1v3h-1zM537 508v-1h2v3h-2zM540 508v-1h6v2h-1v1h-2v1h-1v-1h-2zM548 508v-1h2v1h1v-1h2v-1h6v1h1v1h1v-1h1v-1h1v1h1v1h2v-1h2v1h2v-1h3v1h1v-1h1v1h1v-1h1v1h1v-1h1v1h1v-1h1v-1h1v1h1v-1h1v1h1v1h1v-1h2v3h-1v-1h-1v1h-3v1h-3v-1h-3v1h-1v-1h-3v-1h-1v1h-6v1h-4v-1h-2v1h-1v-1h-2v1h-1v-1h-1v1h-2v-1h-4v-1h-1zM589 508v-1h5v1h1v-1h4v-1h2v1h5v1h2v2h-7v1h-3v-1h-5v1h-2v-2h-2zM610 508v-1h5v2h-1v1h-1v-1h-1v1h-1v-1h-1zM616 508h3v-1h1v1h1v-1h6v-1h1v1h4v3h-3v1h-1v1h-1v-1h-2v1h-1v-2h-8zM636 508v-1h3v3h-2v-1h-1zM640 508v-1h1v-1h1v1h19v3h-12v-1h-1v1h-5v-1h-3zM671 508v-1h1v3h-1zM676 508v-1h1v3h-1zM685 508v-1h2v2h-2zM693 508v-1h3v-1h1v1h1v1h1v-1h2v-1h3v1h2v3h-4v1h-2v-1h-3v1h-2v-1h-2zM707 508v-1h1v-1h1v1h2v1h1v-1h8v1h1v-1h1v-1h1v1h4v-1h3v1h1v-1h1v1h4v3h-3v1h-2v-1h-3v1h-1v-1h-8v-1h-2v1h-2v-1h-1v1h-1v-1h-1v1h-1v1h-2v-1h-1v-1h-1zM739 508h1v-1h7v2h-1v1h-6v1h-1zM748 508v-1h1v-1h2v1h1v-1h1v1h3v1h3v-1h2v1h1v-1h2v3h-1v-1h-1v1h-6v-1h-1v1h-1v-1h-2v2h-3v-2h-1zM765 508v-1h2v3h-2zM768 508v-1h1v-1h3v1h1v-1h1v1h1v-1h2v-1h2v1h2v1h3v-1h1v1h1v-1h4v1h1v-1h2v-1h1v1h1v-3h1v4h3v-1h1v1h2v-1h2v1h1v-1h5v1h9v3h-1v-1h-1v1h-1v-1h-1v1h-3v-1h-1v1h-5v1h-1v-1h-1v1h-2v-1h-4v1h-1v-1h-1v3h-1v-2h-3v-1h-3v1h-3v-1h-7v1h-1v-1h-2v1h-2v-1h-3v2h-1v-1h-2zM824 508v-1h1v3h-1zM828 508v-1h1v3h-1zM831 508v-1h1v-1h2v2h2v-1h3v-1h1v1h1v-1h1v1h2v-1h2v-1h2v-1h2v2h1v1h3v-1h3v1h2v-1h1v1h2v1h2v-1h1v1h1v-2h1v-1h1v-2h1v4h2v-1h4v1h2v-2h1v1h2v1h2v-1h1v1h1v-3h1v1h1v1h1v1h4v-1h1v1h5v-1h3v1h2v1h1v-1h3v-1h2v1h2v1h1v-2h3v2h1v2h-7v1h-2v-1h-2v-1h-1v2h-2v-1h-1v1h-1v-1h-1v1h-1v-1h-1v-1h-2v2h-3v-1h-1v1h-1v-1h-6v1h-1v-1h-1v-1h-1v2h-2v4h-1v-4h-3v-1h-1v1h-1v-1h-3v2h-1v-1h-1v1h-1v-2h-6v1h-4v-1h-1v1h-1v-1h-1v-1h-1v2h-2v1h-2v-2h-1v2h-1v-1h-1v-1h-3v1h-1v-1h-1v1h-4v-1h-2v1h-1v1h-1v-1h-1zM917 508v-1h3v1h1v-1h1v1h1v-1h1v2h-1v1h-6zM925 508v-1h3v2h-3zM929 508v-1h4v1h2v-1h4v-1h1v1h2v-1h1v2h1v-1h1v1h2v-1h1v-1h3v-1h2v2h1v-1h1v3h-1v1h-1v1h-1v-1h-1v1h-2v-1h-4v-1h-1v1h-1v1h-1v-1h-3v1h-1v-1h-8v-1h-1zM956 508h2v-2h1v1h6v-1h1v1h3v1h1v2h-1v1h-4v-1h-2v1h-2v-2h-1v1h-1v-1h-1v1h-1v1h-1zM971 508h1v-2h1v1h1v-1h1v1h2v1h1v2h-2v1h-1v-1h-4zM979 508v-1h1v-1h1v1h2v1h1v-1h1v1h1v-1h4v1h1v-1h1v2h-1v1h-12zM994 508v-1h2v3h-1v-1h-1zM997 508v-1h2v-1h1v1h1v-1h1v2h1v-1h2v-1h2v1h2v-1h3v2h2v-2h2v1h1v-1h1v-3h1v4h1v-1h1v-1h1v1h1v1h2v-1h1v1h1v-1h1v1h1v1h1v-2h1v1h1v1h1v-2h2v1h3v-1h1v1h4v-1h3v1h3v-1h1v1h2v-1h1v1h1v-1h4v1h4v-1h1v1h3v2h-2v2h-2v-1h-1v-1h-1v2h-1v1h-1v-1h-5v-1h-3v1h-1v-1h-3v1h-1v1h-1v-2h-3v1h-1v1h-1v-2h-7v1h-2v-1h-6v1h-1v1h-1v-1h-2v-1h-1v3h-1v-2h-2v-1h-3v1h-1v1h-1v-1h-3v-2h-2v1h-3v1h-2v-1h-4zM1067 508v-1h3v3h-1v1h-1v-1h-1z"/>
<path fill="#00ff00" d="M62 520h126v1h-126zM67 520v-1h1v3h-1zM73 520v-1h1v-1h2v2h1v-1h7v-1h4v-1h1v1h1v1h1v-1h2v4h-4v2h-1v-2h-2v1h-1v-1h-1v1h-4v-1h-2v-1h-1v1h-1v1h-3zM96 520v-1h5v-1h2v4h-7zM107 520v-1h2v1h2v2h-4zM112 520v-1h3v-1h3v1h4v-1h2v1h6v-2h1v-1h1v-1h2v-2h1v1h1v-1h1v1h1v-1h2v3h1v-2h1v1h1v-2h1v5h7v1h1v-1h1v1h3v-1h3v4h-6v1h-2v-1h-1v1h-1v-1h-1v1h-1v-1h-1v1h-1v-1h-1v4h-2v1h-2v-1h-1v1h-1v-1h-2v2h-1v-2h-1v1h-1v-1h-1v1h-1v-2h-1v-2h-1v-1h-2v1h-1v-1h-3v1h-3v-1h-3v1h-1v-1h-2v-1h-1v1h-1zM165 520v-1h1v3h-1zM173 520v-1h1v3h-1zM179 520v-1h1v3h-1zM183 520v-1h2v-1h1v1h2v3h-2v1h-2v-1h-1z"/>
<path fill="#ff0000" d="M152 532h918v1h-918zM152 532v-2h1v1h4v-1h2v2h1v-2h3v1h1v-1h3v-1h1v1h3v1h2v-1h3v2h2v-1h2v1h1v-1h1v-1h7v1h3v-1h2v-1h1v6h-2v2h-1v-2h-1v-1h-1v1h-1v-1h-2v1h-3v1h-1v-1h-1v-2h-1v1h-4v1h-1v-1h-4v1h-2v-1h-2v2h-1v-1h-1v2h-1v-1h-3v-1h-2v-1h-2v1h-2v-1h-2v1h-1v-1h-1zM196 532h2v-1h1v1h2v2h-5zM202 532h1v-1h1v1h1v2h-3zM209 532v-1h1v1h2v2h-3zM215 532h1v2h-1zM220 532v-1h1v1h1v2h-1v-1h-1zM226 532h1v2h-1zM228 532v-1h8v-1h1v1h1v-1h2v1h6v-1h2v1h5v-1h1v1h2v1h1v-1h5v1h1v-1h1v2h-1v1h-2v1h-1v-1h-2v-1h-1v1h-3v2h-1v-2h-2v-1h-1v1h-2v1h-2v-1h-5v1h-2v-2h-1v2h-6v-1h-3v-1h-1zM265 532h1v-1h8v3h-9zM275 532h1v2h-1zM283 532v-1h3v3h-2v-1h-1zM294 532v-1h2v-1h2v1h4v1h2v-1h4v1h1v2h-3v1h-2v-1h-3v1h-1v-1h-2v1h-2v-2h-2zM314 532v-1h4v-1h1v1h10v-1h2v-1h1v2h1v-3h1v2h1v1h1v-1h1v-1h2v1h2v1h1v-1h3v1h1v1h1v-1h5v-1h1v1h1v-1h1v1h5v-1h3v1h1v-1h1v1h4v-1h1v1h2v-1h2v1h2v-1h1v1h2v-1h3v1h3v1h1v-1h3v-1h1v1h1v-1h1v1h3v-1h1v1h1v-1h1v1h1v-1h1v1h1v-1h1v1h5v-1h1v1h2v1h1v-1h6v4h-1v-1h-2v-1h-3v1h-2v1h-1v-1h-4v1h-1v-1h-3v1h-2v-1h-2v1h-1v-1h-3v1h-4v-1h-3v-1h-1v2h-4v-1h-3v1h-3v-1h-1v1h-1v-1h-8v1h-3v-1h-1v1h-1v-1h-2v1h-1v-1h-5v-1h-1v1h-2v1h-2v-1h-3v2h-1v-1h-2v-1h-2v1h-1v1h-1v-2h-3v1h-1v1h-1v1h-1v-1h-1v-1h-1v-1h-6v1h-2v-1h-2v1h-1v-1h-3zM418 532v-1h2v3h-2zM423 532h1v-1h1v1h1v-1h1v1h1v-1h3v1h1v-1h1v1h1v-1h7v2h-1v1h-7v-1h-1v1h-3v-1h-1v1h-3v-1h-1v1h-1zM446 532v-1h1v3h-1zM449 532h1v-1h1v1h3v-1h4v-1h1v1h2v-1h1v1h3v3h-4v1h-1v-1h-4v1h-1v-1h-6zM466 532h1v2h-1zM468 532v-1h2v-1h1v1h2v3h-1v1h-1v-1h-2v-1h-1zM474 532v-1h2v-1h1v1h1v-1h3v1h1v-1h1v1h2v-1h2v1h4v3h-2v1h-2v-2h-1v1h-3v-1h-1v2h-1v-1h-1v1h-1v-1h-4v-1h-1zM492 532v-1h1v3h-1zM501 532h2v-2h1v1h2v-1h1v1h3v1h1v-1h1v1h1v-1h3v2h-1v2h-1v-1h-6v1h-4v-1h-3zM517 532v-1h5v2h-5zM523 532v-1h2v-1h1v1h3v-1h1v1h1v-1h2v1h2v-1h1v1h2v1h1v-1h1v1h1v-1h2v-1h1v-1h1v2h1v1h1v-1h1v-2h2v2h1v-1h1v1h1v-1h1v1h1v1h1v-1h5v-1h4v1h1v-1h4v1h2v1h1v-1h2v-1h1v1h2v1h1v-1h2v1h2v-1h1v-1h1v1h5v-1h3v1h2v-1h1v1h2v-1h2v1h1v-1h6v1h4v-1h3v2h1v-1h2v-1h1v1h4v1h1v-1h2v-1h1v1h2v-1h1v1h1v-1h1v1h4v1h1v-1h1v1h1v-1h1v-1h3v1h2v1h1v-1h5v-1h1v1h2v1h2v2h-4v1h-1v-1h-3v1h-3v-1h-1v-1h-1v1h-1v1h-3v-1h-4v1h-5v-1h-7v-1h-1v1h-7v1h-4v-1h-2v1h-1v-1h-3v1h-4v-1h-1v-1h-1v2h-1v-1h-7v1h-1v-1h-3v-1h-1v2h-2v-1h-12v1h-2v-1h-1v-1h-1v1h-2v1h-1v1h-2v-1h-2v-1h-1v1h-1v-1h-1v1h-1v-1h-1v1h-1v-1h-2v1h-2v-1h-6v1h-1v-1h-1v-1h-1v1h-5v1h-1v-1h-2v1h-7v-1h-1v1h-2zM661 532v-1h1v-1h4v1h1v1h2v-1h1v-1h1v1h1v1h2v-1h2v-1h3v1h1v1h1v-1h2v-1h3v1h8v-1h1v1h1v1h1v-1h1v-1h2v1h1v-1h1v1h3v-1h2v1h2v-1h3v1h1v4h-8v-1h-1v1h-6v-1h-2v-1h-4v1h-4v1h-2v-1h-3v1h-2v-1h-3v-1h-1v1h-12v1h-1v-1h-2v-1h-1zM718 532h1v-1h11v-1h3v1h2v1h1v-2h2v1h2v-1h5v1h3v-1h1v1h2v1h1v2h-3v2h-1v-2h-1v-1h-2v1h-1v1h-4v-1h-4v1h-1v-1h-2v1h-1v-1h-1v1h-2v-1h-4v1h-1v-1h-1v1h-2v-1h-3zM753 532v-1h2v-1h3v1h2v1h1v-1h1v2h-1v1h-3v1h-1v-1h-2v-1h-2zM763 532v-1h4v2h-1v1h-3zM774 532v-2h7v-1h1v2h3v1h3v-2h3v1h2v-1h2v1h2v-1h1v1h2v-2h2v1h1v1h1v1h1v-1h2v3h-2v1h-1v-1h-2v1h-1v1h-1v-2h-3v-1h-1v1h-5v1h-1v1h-1v-2h-2v1h-2v-1h-1v1h-1v-1h-1v1h-1v-1h-1v2h-1v-1h-3v-1h-1v1h-1zM808 532v-1h4v3h-4zM820 532v-1h5v-1h1v1h4v-1h1v1h5v1h1v-1h1v4h-1v-1h-2v1h-2v-1h-6v-1h-1v2h-1v-1h-2v1h-2v-1h-1zM839 532h1v-1h3v3h-4zM850 532v-1h2v-1h1v2h1v-1h1v-1h2v1h1v-1h2v5h-1v-2h-1v1h-1v1h-1v-1h-4v1h-1v-1h-1zM865 532v-2h1v-1h2v1h8v1h4v1h1v-1h1v-1h1v1h1v-1h3v1h5v4h-3v-1h-2v1h-5v-1h-2v1h-1v1h-2v-1h-1v2h-1v-1h-2v-1h-1v1h-1v-1h-1v1h-2v-1h-1v1h-1v-1h-1zM914 532v-1h1v3h-1zM918 532v-1h1v3h-1zM926 532v-1h2v1h3v-1h2v-1h2v1h1v1h1v-1h3v2h-1v1h-13zM974 532v-1h1v-1h1v1h1v-1h4v1h3v4h-1v-1h-1v1h-1v-1h-1v1h-3v-1h-1v1h-2zM1001 532v-1h2v-1h1v1h2v3h-5zM1015 532v-1h3v1h1v-1h2v-1h1v1h5v-1h2v1h3v-1h1v1h1v1h1v2h-1v1h-1v1h-1v-2h-1v-1h-1v2h-1v-1h-1v1h-3v-1h-1v1h-1v-1h-1v1h-3v-1h-1v1h-1v-1h-2zM1037 532v-1h2v2h-2zM1042 532h2v2h-2zM1045 532h3v-1h11v3h-1v-1h-1v1h-8v1h-1v-1h-3zM1060 532v-2h1v1h1v-1h1v1h3v-2h1v1h2v1h1v4h-2v-1h-1v2h-1v-1h-1v-1h-1v1h-1v-1h-2v1h-1z"/>
<path fill="#12bdeb" d="M60 544h1010v1h-1010zM60 544v-2h1v-1h1v1h1v2h1v-1h2v-1h2v1h1v-2h1v2h1v1h5v-1h1v1h1v-2h2v1h8v-1h2v1h4v-1h2v1h5v1h1v-1h1v1h1v-1h16v-1h1v1h2v1h1v-1h1v-1h2v1h2v-1h1v1h5v1h1v2h-1v1h-2v-2h-1v2h-1v-1h-5v1h-2v-1h-4v1h-1v-1h-23v1h-1v-1h-4v1h-1v1h-2v-1h-1v-1h-2v1h-3v-1h-1v1h-1v-1h-11v-1h-1v1h-2v1h-1v-1h-2v1h-3zM137 544h2v2h-2zM140 544h1v-1h1v3h-2zM193 544v-2h1v5h-1zM199 544v-1h1v-1h2v1h2v-1h2v1h1v-1h1v5h-1v-1h-4v1h-1v-1h-3zM211 544v-1h1v2h-1zM215 544h1v2h-1zM218 544h1v-1h3v1h1v-1h6v1h1v2h-2v1h-2v-1h-2v-1h-1v1h-1v-1h-1v1h-3zM246 544v-1h8v1h1v-1h1v-1h1v1h1v4h-3v-1h-1v1h-3v-1h-5zM259 544v-1h2v-1h3v1h2v-1h2v1h1v3h-2v1h-1v-1h-3v1h-1v-1h-3zM270 544v-1h3v-1h1v1h2v1h1v-1h1v3h-2v-1h-1v1h-3v1h-2zM283 544h2v-1h3v1h1v-1h1v-1h1v1h4v3h-4v1h-1v-1h-3v1h-1v-1h-2v1h-1zM318 544v-1h4v2h-1v1h-1v-1h-2zM325 544v-1h3v-1h3v1h8v3h-2v-1h-1v1h-3v1h-3v-1h-2v1h-1v-1h-2zM345 544v-1h2v-1h2v1h4v-1h2v-1h2v1h1v4h-1v1h-6v-1h-1v-1h-2v1h-3zM360 544v-1h3v1h1v2h-1v1h-2v-1h-1zM366 544v-1h1v2h-1zM368 544v-2h1v2h2v-2h3v1h2v3h-3v1h-1v-1h-3v1h-1zM377 544v-1h3v-1h1v1h2v2h-1v1h-4v1h-1zM395 544v-1h2v1h1v-1h1v1h2v-1h3v-1h7v-1h1v1h1v1h1v1h3v2h-4v1h-5v-1h-9v-1h-1v1h-2v-1h-1zM419 544h1v2h-1zM422 544v-1h1v2h-1zM453 544v-1h6v3h-3v-1h-2v1h-1zM473 544v-1h1v1h3v-1h3v3h-7zM483 544v-1h2v3h-1v-1h-1zM486 544v-2h1v5h-1zM497 544v-1h1v-1h3v1h1v-1h2v1h3v-1h3v1h2v-1h1v1h3v1h1v-1h5v-2h1v1h1v-1h1v1h1v-1h1v2h1v1h1v-1h1v-1h5v1h4v-1h1v1h4v1h1v-2h1v1h5v1h1v-1h1v1h1v-1h1v-1h1v-1h2v1h1v-1h1v2h1v-1h2v-1h1v1h1v1h2v-2h1v1h3v-1h1v2h1v1h1v-1h4v-1h3v4h-7v1h-2v-1h-3v1h-4v-1h-1v1h-1v1h-2v-1h-2v1h-1v-1h-1v-1h-12v1h-1v-1h-1v1h-1v-1h-3v1h-4v-1h-1v1h-1v1h-1v-1h-1v1h-1v-1h-5v-1h-1v1h-1v-1h-2v1h-2v-1h-9v1h-1v-1h-5v1h-1v-1h-3v1h-1v-1h-2zM597 544v-1h2v-1h1v2h1v-1h1v-1h3v-1h2v2h1v1h1v-2h2v1h4v-1h1v1h4v-1h1v1h8v3h-4v1h-1v-2h-1v1h-2v-1h-1v1h-6v1h-2v-1h-1v1h-1v-1h-3v1h-1v1h-1v-1h-1v1h-1v-1h-1v-1h-5zM639 544v-2h2v1h3v-1h3v1h2v-1h1v1h3v1h1v-1h1v-1h1v1h2v3h-2v-1h-1v1h-4v1h-1v-1h-1v1h-5v-1h-2v1h-2v-1h-1zM659 544v-1h2v1h1v-1h1v4h-2v-1h-1v-1h-1zM672 544v-1h2v1h1v2h-2v-1h-1zM677 544v-1h6v2h-2v1h-2v-1h-2zM685 544v-1h8v3h-1v-1h-1v1h-6zM698 544v-1h2v-1h1v1h1v1h1v-1h2v-3h1v3h2v-1h4v1h1v-1h1v1h2v-1h2v1h1v3h-4v1h-1v-1h-1v1h-5v-1h-1v1h-2v-1h-7zM720 544v-1h8v-2h1v2h1v-1h1v1h2v-1h2v1h1v-1h2v-1h1v1h3v1h1v-1h2v-1h1v1h3v1h1v-1h3v-2h1v1h1v1h5v2h1v-1h1v1h1v-2h1v1h2v-1h2v1h1v-1h1v1h1v3h-1v1h-1v1h-1v-1h-2v-1h-1v1h-2v-1h-1v-1h-1v1h-2v-1h-1v2h-2v-1h-1v1h-3v1h-1v-2h-1v1h-1v1h-1v-1h-1v1h-2v-1h-2v-1h-1v-1h-1v1h-1v1h-3v-1h-2v1h-1v-1h-1v1h-4v-1h-8v-1h-1zM772 544v-1h2v-1h2v4h-1v1h-2v-1h-1zM793 544v-2h3v1h1v-1h1v1h2v-1h2v1h1v4h-1v-1h-1v1h-1v-1h-2v-1h-1v1h-2v1h-2zM804 544v-1h2v2h-1v1h-1zM807 544h1v-1h2v-1h1v1h2v-1h1v1h3v3h-1v-1h-1v1h-1v1h-1v-1h-2v1h-1v-1h-1v1h-1v-1h-1zM818 544v-1h2v-1h1v1h1v1h1v-1h2v-1h2v1h3v-1h1v1h4v-1h1v1h1v-1h1v1h1v1h1v-2h1v-1h1v1h1v1h1v-1h1v1h1v1h1v-1h2v1h1v-1h2v-1h2v1h3v1h1v-1h4v-1h1v1h6v-1h3v2h1v-1h2v-1h1v1h2v-1h1v1h2v-1h3v1h4v1h1v-1h5v-1h1v1h4v-1h6v1h1v-1h1v1h1v1h1v-1h4v-1h1v1h15v-1h1v2h1v-1h1v3h-3v-1h-1v1h-1v1h-1v-1h-1v1h-3v-1h-5v1h-1v-1h-8v-1h-1v1h-2v1h-2v-1h-6v1h-3v-1h-7v-1h-1v1h-1v1h-1v-1h-2v1h-2v-1h-9v1h-3v-1h-7v1h-1v-1h-1v-1h-1v1h-3v1h-2v-1h-4v1h-1v-1h-1v1h-6v1h-1v-1h-1v1h-2v-1h-2v1h-1v-2h-3v1h-4v-1h-3v-1h-1v1h-1v-1h-1v2h-1v-1h-1v2h-1zM933 544h1v-1h1v1h1v-1h1v-1h1v1h1v1h1v-1h1v1h1v-1h1v-1h1v1h1v-1h1v-2h1v2h1v-1h3v-2h1v3h1v-1h1v3h2v-1h2v-3h1v1h1v1h1v-1h1v1h1v-2h4v1h1v2h2v-1h1v1h4v-1h1v1h1v-1h1v1h2v-1h2v1h4v-1h1v1h1v1h1v-3h1v3h1v-2h1v1h1v1h1v-3h2v1h1v-1h3v-1h1v2h1v2h1v-1h6v-1h1v1h3v1h2v2h-5v1h-2v-1h-1v1h-1v-1h-6v1h-3v1h-1v-1h-1v2h-1v-3h-1v1h-1v1h-2v-1h-1v-1h-4v1h-1v-1h-2v1h-2v-1h-2v1h-1v-1h-5v1h-1v-1h-1v-1h-1v2h-1v-1h-2v3h-1v-1h-1v2h-3v-1h-1v-1h-1v1h-1v-3h-4v3h-1v-1h-2v1h-1v-2h-1v-1h-1v2h-1v-1h-1v-1h-2v1h-1v-1h-2v1h-1v-1h-2v1h-1v-1h-4zM1016 544v-1h2v1h2v-1h4v3h-1v-1h-1v1h-5v-1h-1zM1026 544v-1h3v1h1v2h-1v-1h-3zM1032 544h1v-1h1v-1h2v-1h1v-1h1v1h1v1h5v1h1v-1h2v1h5v1h1v-1h2v2h-2v1h-3v-1h-1v1h-4v1h-1v-1h-1v2h-1v-2h-1v2h-2v1h-1v-1h-3v-1h-1v-1h-2zM1056 544v-1h5v1h1v-1h1v4h-2v-1h-2v-1h-1v2h-1v-1h-1zM1064 544h1v-2h1v1h1v-1h2v1h1v4h-2v-1h-1v1h-2v-1h-1z"/>
<path fill="#ffff00" d="M60 556h1010v1h-1010zM60 556v-1h2v-1h1v1h1v-1h2v1h1v1h1v-1h3v1h2v2h-9v1h-1v-2h-1v1h-2zM74 556h1v-1h1v3h-2zM79 556h1v-2h1v1h1v-1h1v1h3v-1h1v1h1v-1h1v1h2v-1h1v1h2v1h1v-1h2v-1h1v1h5v3h-2v1h-5v1h-1v-1h-2v-1h-1v3h-1v-2h-1v-1h-2v1h-2v-1h-1v-1h-2v1h-1v1h-2v-1h-1zM113 556h1v-1h2v-1h1v1h1v-1h1v5h-1v-1h-1v1h-2v-1h-2zM137 556v-1h1v3h-1zM153 556v-2h1v1h2v-1h2v1h2v-1h2v4h-1v1h-4v-1h-1v1h-1v-1h-2zM163 556v-1h1v3h-1zM170 556v-1h5v-3h1v3h2v-1h2v5h-1v-1h-2v1h-1v1h-1v-2h-1v-1h-1v1h-3zM190 556v-1h1v1h2v-1h1v-1h1v1h1v-1h1v-1h1v-1h1v2h3v-1h1v1h2v-1h1v2h5v-1h1v1h1v1h1v-1h5v1h2v-1h1v1h1v2h-8v-1h-1v1h-3v-1h-1v2h-1v-1h-2v1h-5v2h-2v1h-1v-1h-1v-2h-1v-1h-1v1h-2v-1h-4zM224 556v-1h3v-1h1v4h-3v-1h-1zM229 556h1v-1h1v1h2v-1h3v1h1v-1h4v1h1v-1h1v1h1v-1h1v3h-10v-1h-1v1h-5zM246 556h1v-2h1v-1h1v1h4v1h3v1h1v-2h1v1h4v1h1v-1h6v2h-1v1h-7v1h-3v-1h-2v-1h-1v2h-1v-1h-2v1h-5v-1h-1zM270 556v-1h1v-1h4v1h1v-1h1v1h2v3h-1v1h-3v-1h-2v1h-1v-1h-2zM280 556v-2h10v1h2v-1h2v-1h1v2h1v-1h1v1h1v-2h1v-1h1v1h2v1h1v-1h1v1h2v1h2v-2h1v1h2v-1h1v1h2v4h-2v1h-4v-1h-1v1h-2v-1h-1v1h-1v1h-1v-1h-2v1h-1v1h-1v-2h-1v1h-1v-2h-5v1h-6v-1h-1v1h-1v-1h-3zM315 556h1v-3h1v2h2v4h-3v-1h-1zM320 556v-1h4v-1h1v1h3v1h1v-1h8v1h1v-1h4v-1h1v1h9v-1h2v1h1v-1h3v1h2v3h-5v1h-1v-1h-1v1h-1v-1h-1v1h-1v-1h-7v1h-1v-1h-17v1h-1v-1h-1v1h-2v-1h-1zM361 556v-1h1v1h1v-1h4v3h-6zM378 556v-1h1v3h-1zM384 556v-2h1v-1h1v1h1v5h-3zM404 556v-1h1v3h-1zM411 556h1v-1h4v3h-4v1h-1zM419 556v-1h1v3h-1zM422 556v-1h1v3h-1zM424 556v-1h9v-1h1v1h4v3h-1v-1h-2v1h-1v1h-1v-1h-1v-1h-2v1h-6zM449 556v-1h2v1h1v-1h3v1h1v-1h5v-1h4v1h1v-1h1v5h-1v-1h-1v3h-1v-3h-1v1h-1v-1h-3v1h-2v-1h-8zM473 556v-1h1v3h-1zM484 556v-2h1v1h1v-1h2v1h2v-1h2v1h1v-1h4v1h1v-1h1v1h1v-1h1v1h1v-3h1v3h1v3h-1v1h-1v-1h-5v-1h-1v2h-2v-1h-1v-1h-2v3h-1v-2h-3v1h-1v-1h-2zM505 556v-1h2v1h2v-1h5v-6h1v4h1v2h4v-1h3v1h1v-2h4v2h1v-1h1v-1h1v2h4v1h1v-1h5v-2h1v1h1v-1h1v1h3v-1h2v2h6v-2h1v1h1v1h3v1h1v-1h2v1h1v-2h1v1h2v3h-11v3h-1v-2h-2v-1h-1v-1h-1v2h-1v-1h-1v1h-2v1h-1v-1h-3v-1h-1v1h-1v-1h-2v1h-1v-1h-3v1h-2v-1h-1v1h-1v1h-4v1h-2v-1h-4v-1h-1v-1h-4v3h-1v4h-1v-6h-1v-1h-6v-1h-1v1h-1zM569 556v-1h2v1h1v2h-3zM574 556v-1h4v-1h1v1h4v1h1v-1h2v-1h1v2h2v-1h1v1h1v-1h2v1h4v-2h1v4h-1v1h-1v-1h-4v-1h-1v1h-4v1h-1v-1h-9v-1h-1v1h-2zM602 556v-1h1v-1h1v1h5v-1h1v1h1v-1h1v1h2v-1h2v1h1v-1h1v1h5v1h1v2h-1v-1h-1v1h-4v1h-2v-1h-2v-1h-1v1h-1v1h-2v-1h-3v2h-1v-2h-1v1h-1v1h-1v-1h-1zM625 556v-1h1v-1h1v1h1v1h1v-1h3v-7h1v7h1v-3h1v-2h2v3h1v1h2v1h1v-6h2v6h1v1h1v-2h1v1h1v-1h1v-2h1v-1h1v2h1v2h2v-1h1v2h1v-1h1v-1h4v1h2v-1h1v4h-3v1h-1v-1h-1v1h-1v-1h-3v4h-1v-4h-2v1h-1v4h-1v-4h-1v1h-1v-2h-4v7h-2v-6h-1v-1h-1v-1h-1v1h-1v4h-1v-2h-2v-1h-1v4h-1v-5h-2v-1h-1v2h-1v-1h-1v1h-1v-1h-1zM664 556v-1h1v-1h1v1h3v-1h1v1h1v-1h2v1h2v1h1v-2h1v1h1v-1h1v1h1v-1h1v-1h1v1h1v-1h1v1h3v1h1v1h1v-1h1v-1h2v1h1v1h1v-2h1v1h2v-1h1v1h2v1h1v-1h1v-3h1v3h1v-2h1v2h2v-1h2v1h4v-5h1v5h1v-3h1v3h1v-5h1v5h1v-1h1v1h5v-1h1v1h2v-1h1v1h1v-1h1v1h2v-2h1v1h1v-1h1v2h2v-2h1v2h1v-1h1v1h2v-1h3v1h2v-1h3v1h9v-1h1v1h3v-3h1v4h1v-3h2v1h4v1h10v-3h2v-1h1v3h2v1h3v1h1v-1h1v3h-2v-1h-1v1h-2v2h-2v1h-1v-1h-1v-2h-5v-1h-1v2h-2v-1h-6v2h-1v-1h-1v-2h-1v1h-1v3h-1v-3h-5v1h-1v-1h-1v-1h-1v1h-1v-1h-1v1h-1v1h-1v-1h-1v1h-1v-1h-1v-1h-1v1h-1v-1h-1v2h-1v-1h-1v1h-2v-1h-1v1h-3v-1h-2v1h-1v1h-1v-1h-2v-1h-3v1h-1v-1h-1v1h-2v-1h-1v1h-1v-1h-5v5h-1v-5h-1v3h-1v-3h-1v3h-1v-4h-4v1h-1v1h-1v1h-2v-1h-2v4h-1v-5h-3v1h-2v-1h-6v2h-1v-1h-1v-1h-1v1h-1v-2h-1v2h-1v-1h-1v1h-1v1h-2v-2h-2v1h-4v-1h-1v1h-1v1h-1v-1h-2v2h-1v-3h-2v1h-1v-1h-1v-1h-1zM793 556h2v-1h2v-1h3v1h2v1h1v2h-10zM804 556v-1h1v-1h1v-2h1v3h3v-3h1v2h1v-1h1v-3h1v5h7v-1h2v2h1v-1h13v-1h2v1h1v-1h3v-2h2v2h2v-1h2v1h1v1h1v-2h1v1h2v1h5v-1h2v1h2v-1h1v-3h1v4h1v3h-1v3h-1v-3h-1v1h-1v-1h-5v1h-2v-1h-2v3h-1v-2h-1v-1h-2v1h-1v-1h-1v1h-4v1h-2v-2h-14v-1h-1v1h-3v1h-1v-1h-2v-1h-2v1h-3v1h-1v2h-1v2h-1v-5h-1v2h-1v-2h-2v1h-2v-1h-2zM868 556v-1h2v1h1v-1h5v2h-1v1h-1v-1h-1v1h-5zM884 556v-1h1v1h1v-1h2v4h-2v-1h-1v1h-1zM891 556v-1h2v-1h1v-2h1v4h1v-1h1v-1h1v1h3v-1h1v1h1v-1h3v2h1v-2h1v-1h1v2h2v-1h1v-1h1v1h1v-6h1v7h1v-1h3v1h1v-3h1v2h1v1h7v-1h1v1h3v1h1v-1h2v-1h1v1h1v-1h1v1h1v-1h1v1h1v-1h1v1h1v-1h1v-2h1v3h1v-4h2v4h1v-1h3v1h8v-1h1v1h1v-1h5v1h7v-1h1v1h1v1h1v-1h4v1h1v-1h5v1h1v2h-7v1h-2v-1h-1v-1h-1v2h-1v-1h-2v1h-2v-1h-6v1h-4v-1h-2v1h-1v-1h-2v1h-2v-1h-4v1h-2v-2h-1v5h-1v1h-1v-4h-1v4h-1v-6h-1v1h-1v1h-1v-1h-1v1h-1v-1h-1v1h-1v-1h-3v-1h-1v1h-8v-1h-1v1h-3v2h-2v-2h-2v-1h-1v2h-1v-1h-1v7h-1v-7h-1v1h-3v-1h-1v1h-1v-1h-4v-1h-1v1h-1v1h-1v-1h-1v-1h-1v1h-1v1h-1v-1h-2v1h-1v-1h-3zM990 556v-1h4v-1h1v1h1v-1h2v1h1v1h1v-1h2v4h-1v-1h-8v-1h-2v1h-1zM1011 556v-1h1v3h-1zM1021 556v-1h1v3h-1zM1027 556v-1h3v-1h1v1h2v-1h1v-1h1v2h1v-1h1v-2h1v2h1v1h1v1h1v-4h1v4h1v-1h1v3h-2v3h-1v-3h-1v1h-1v1h-3v-2h-1v1h-1v-1h-1v1h-1v-1h-5zM1052 556v-1h1v3h-1zM1061 556h1v-1h1v3h-2zM1064 556h1v-2h1v1h2v-1h2v3h-2v1h-2v-1h-1v1h-1z"/>
<path fill="#00ff00" d="M60 568h1010v1h-1010zM60 568v-1h3v-1h1v1h3v-1h2v1h2v-1h2v-1h1v1h1v-2h1v1h1v1h4v1h1v-5h1v4h1v1h1v1h1v-1h1v1h1v-1h1v1h1v2h-5v1h-1v2h-1v2h-1v-4h-1v-1h-1v2h-1v1h-2v-1h-1v1h-2v-1h-1v1h-1v-1h-1v-1h-3v-1h-2v1h-2v-1h-1v1h-1v-1h-1v1h-1zM92 568h1v-1h4v1h1v-1h1v1h1v-1h2v2h-2v1h-1v-1h-1v1h-2v-1h-1v1h-3zM103 568v-1h2v1h1v-1h3v1h1v2h-7zM111 568v-1h2v-1h3v1h4v-2h1v2h7v1h1v-1h1v-1h4v1h1v-1h1v1h2v1h1v-1h1v-1h1v1h2v1h1v-1h6v1h1v2h-1v-1h-1v1h-6v-1h-1v1h-1v1h-1v-1h-3v1h-1v-1h-1v1h-4v-1h-3v-1h-1v1h-4v1h-1v-1h-1v2h-1v-2h-6v1h-1v-1h-2zM152 568v-1h1v-1h2v2h1v-1h1v-1h1v-1h1v-2h1v-1h1v-2h1v2h1v1h1v3h2v-1h1v1h3v1h1v-1h1v-1h1v-1h2v-3h2v-2h1v3h2v2h1v-1h1v2h2v1h2v1h1v3h-2v-1h-1v3h-3v1h-1v1h-1v1h-1v1h-1v3h-1v-3h-1v-3h-1v2h-1v-1h-1v-2h-1v-1h-1v1h-1v-2h-2v1h-3v1h-1v3h-1v5h-1v-5h-1v-2h-1v-2h-4v-1h-3zM188 568v-1h1v-1h2v1h12v1h2v-1h2v-1h1v1h4v-1h1v-3h1v4h1v-1h2v-1h1v-1h2v-1h2v1h1v-1h1v-2h1v-3h1v1h2v1h2v2h1v2h1v2h1v-1h1v1h1v-1h1v-2h1v2h2v-2h1v4h1v-3h1v2h1v1h2v-1h6v1h3v-1h1v1h3v1h1v-1h2v-1h2v1h1v1h3v-1h2v-1h1v1h1v-1h1v1h12v-1h1v2h2v-1h1v-1h1v1h3v1h1v-1h1v-1h1v1h4v3h-3v1h-3v-1h-4v1h-1v-1h-3v2h-1v-3h-1v1h-3v-1h-1v1h-2v1h-1v-1h-1v-1h-1v1h-3v1h-4v-1h-4v1h-1v-1h-2v-1h-1v1h-2v-1h-2v1h-3v1h-1v-1h-2v1h-1v1h-1v-1h-1v1h-1v-1h-3v1h-2v3h-1v-4h-1v3h-1v-2h-1v2h-1v-3h-1v-1h-1v2h-1v-1h-1v2h-1v3h-1v2h-2v3h-1v-3h-1v-3h-1v-1h-1v1h-1v-1h-1v1h-1v-2h-1v-1h-1v-1h-1v1h-1v-1h-1v-1h-1v3h-1v-3h-5v1h-1v-1h-1v1h-1v-1h-7v-1h-2v1h-1v-1h-1v1h-3v1h-2v-1h-1zM300 568v-4h1v4h1v-1h1v1h1v-1h3v-1h1v1h2v-3h1v3h2v1h1v-1h1v-1h1v1h1v-1h1v1h1v-1h1v-1h2v1h2v-1h1v-1h1v-1h1v1h1v2h1v1h2v-1h1v1h2v3h-1v1h-1v1h-2v-1h-3v4h-1v-2h-1v-1h-1v-1h-1v-1h-1v2h-2v-2h-3v1h-1v-1h-1v1h-1v-1h-3v3h-1v-4h-1v1h-2v1h-2v-1h-3v1h-1v2h-1zM336 568v-4h1v9h-1zM338 568v-4h1v9h-1zM340 568v-4h1v3h4v1h2v-1h2v1h1v-1h1v-1h1v1h2v1h1v2h-2v1h-2v-1h-1v1h-4v-1h-5v3h-1zM365 568h1v2h-1zM369 568v-1h6v3h-6zM376 568h1v-1h7v2h-1v1h-1v-1h-3v1h-1v-1h-1v1h-1zM385 568h1v2h-1zM387 568v-1h3v-1h2v1h1v3h-2v1h-1v-1h-1v-1h-2zM394 568v-1h4v-1h1v1h2v-1h2v1h1v1h1v-1h3v1h1v-1h2v-1h2v-3h1v2h1v-1h1v-3h1v3h1v1h1v2h1v-1h1v-1h1v1h1v1h6v-1h1v1h4v-1h1v1h6v-1h1v-1h3v1h1v-1h1v1h4v1h4v-1h1v1h1v3h-2v1h-2v-1h-2v1h-2v-1h-1v1h-1v2h-1v-1h-2v-1h-2v-1h-1v2h-1v-1h-1v-1h-4v1h-3v-1h-2v1h-1v-1h-3v1h-2v-1h-1v1h-1v1h-1v-2h-1v2h-1v-2h-1v5h-1v-1h-1v-1h-3v-1h-1v-2h-1v1h-2v-1h-1v-1h-1v1h-5v3h-1v-2h-1v-1h-2v1h-2v-2h-2zM471 568v-1h2v-1h2v1h2v1h1v-2h4v5h-3v1h-1v-1h-1v-1h-2v1h-2v-1h-2zM488 568v-1h3v1h1v2h-1v-1h-1v1h-1v-1h-1zM494 568v-1h2v-1h2v1h5v1h1v-1h14v-1h1v5h-1v-1h-1v-1h-3v1h-7v1h-3v-1h-2v-1h-1v1h-1v1h-5v-1h-1zM523 568v-1h5v-1h1v1h4v1h1v2h-2v1h-1v-1h-1v1h-1v-1h-2v-1h-1v1h-3zM535 568v-1h2v-1h5v1h2v1h1v-1h2v2h-2v1h-2v1h-1v-2h-1v1h-1v1h-2v-1h-2v-1h-1zM548 568v-1h1v-1h2v1h9v3h-6v-1h-1v1h-4v-1h-1zM561 568v-6h2v6h1v2h-1v5h-2zM565 568v-1h1v2h-1zM571 568v-1h3v2h-1v1h-2zM575 568v-2h1v1h5v1h1v-1h1v-1h2v1h2v-1h2v2h1v-1h5v3h-1v1h-4v-1h-2v1h-1v-1h-4v-1h-1v1h-1v-1h-1v1h-3v1h-1v-1h-1zM598 568v-8h2v6h1v5h-1v3h-2zM602 568v-6h4v5h4v-1h1v1h6v-1h1v1h2v-1h1v1h2v-1h3v1h1v-1h3v2h3v-1h2v1h1v-2h1v1h1v-1h2v1h3v-1h1v-1h1v1h1v-1h1v1h1v1h2v1h1v-1h1v-1h7v1h1v3h-2v1h-1v1h-1v-1h-3v-1h-1v-1h-1v1h-1v-1h-1v1h-1v1h-1v1h-3v-1h-1v-1h-3v1h-2v-2h-1v2h-1v-1h-2v-1h-1v1h-3v1h-3v-1h-1v1h-1v-1h-1v3h-1v-3h-3v1h-1v-1h-8v1h-5v4h-4zM661 568v-1h2v1h1v2h-1v1h-1v-1h-1zM667 568v-2h1v1h2v2h-2v2h-1zM676 568v-2h1v1h8v-1h3v1h1v-1h1v1h6v-1h3v1h1v-1h1v1h2v-2h1v2h5v-1h1v1h1v3h-4v1h-1v-1h-2v3h-1v-3h-2v1h-2v-1h-1v-1h-1v1h-1v1h-3v-2h-3v1h-1v1h-1v-1h-1v1h-4v-1h-1v-1h-1v1h-3v1h-2zM713 568v-1h3v3h-3zM726 568v-1h2v-1h2v1h2v-1h1v1h6v-1h1v-1h1v1h2v2h1v-1h1v-1h2v-1h1v2h2v-2h1v1h1v-1h1v1h2v1h3v-1h2v-1h1v1h1v-1h1v1h1v1h1v-1h2v1h2v-1h1v-2h1v1h3v1h1v1h1v-1h1v1h1v-2h2v1h1v-1h1v1h1v-1h1v-2h1v-1h2v1h1v1h1v1h1v1h2v1h3v-1h1v-1h2v1h1v-1h1v1h2v1h1v1h1v-1h5v-2h1v1h3v1h1v1h1v-1h1v-1h2v1h4v-1h2v1h1v1h1v-1h3v-1h3v-1h1v1h1v-1h1v1h2v1h2v-1h1v-2h1v1h2v-1h1v2h2v-7h1v-3h1v-5h1v5h1v3h2v-1h1v2h1v2h1v2h1v-1h1v3h2v-1h1v1h1v-1h2v1h1v-1h1v2h2v-1h1v1h1v-1h2v1h6v-1h1v1h4v-1h1v1h1v-1h3v4h-4v1h-1v-1h-5v1h-1v-1h-2v1h-2v-1h-1v1h-2v-1h-1v1h-1v-1h-2v1h-1v2h-1v-2h-2v1h-2v-1h-2v2h-1v-1h-1v2h-1v1h-1v2h-3v1h-1v3h-1v-2h-1v-5h-1v-2h-3v1h-3v-2h-1v-1h-2v1h-1v1h-1v-1h-6v-1h-1v1h-1v-1h-2v-1h-1v1h-3v-1h-2v1h-1v1h-1v1h-1v-2h-3v1h-1v-2h-1v1h-1v1h-1v1h-1v-1h-1v-1h-1v-1h-1v1h-2v1h-2v1h-1v-1h-1v-1h-1v2h-1v-1h-1v-1h-1v1h-1v-1h-2v-1h-1v1h-1v1h-1v1h-1v1h-1v-1h-2v2h-1v-2h-3v-1h-1v1h-2v-1h-1v-1h-1v2h-4v-1h-1v-1h-5v2h-1v-1h-2v1h-2v-1h-1v-1h-3v1h-1v-1h-1v1h-2v1h-3v-2h-2v2h-3v-2h-1v1h-9v-1h-8v-1h-1zM888 568h1v-1h5v3h-3v-1h-1v1h-2zM895 568h1v-1h1v-1h2v1h12v-1h2v1h1v-1h2v1h1v1h1v-1h3v-1h2v2h1v-2h3v-1h1v2h1v-3h1v1h3v1h1v1h1v-1h1v1h3v1h1v-2h1v1h3v-1h2v1h1v-1h1v1h5v-1h2v1h1v-1h1v1h1v-1h2v-1h1v1h1v1h1v-2h1v-1h1v1h1v-1h2v2h1v1h2v-2h1v1h1v1h1v-1h5v-1h1v1h1v1h6v-1h4v1h1v1h1v2h-3v1h-2v-1h-3v1h-2v-1h-1v1h-4v-1h-2v2h-1v-1h-1v1h-2v1h-1v-1h-1v-1h-1v1h-2v-1h-1v2h-1v-1h-2v-2h-1v1h-2v-1h-2v-1h-1v1h-3v1h-2v-1h-3v1h-2v-1h-2v1h-1v-1h-9v1h-4v-1h-1v3h-1v-1h-1v-1h-1v-1h-5v1h-1v-1h-4v1h-4v-1h-3v-1h-1v2h-1v-1h-4v-1h-1v1h-1v1h-1v-1h-6zM994 568v-1h2v-1h3v2h2v-1h10v-1h1v1h2v-1h5v1h1v-4h2v-1h2v2h1v2h2v1h3v-1h1v1h8v1h1v-2h1v1h2v-1h1v3h-1v1h-1v1h-1v-2h-1v1h-4v1h-2v-1h-3v1h-2v-1h-1v1h-3v3h-1v1h-1v1h-1v-1h-1v-1h-1v-2h-2v-1h-1v1h-1v-2h-1v1h-5v-1h-1v-1h-2v1h-3v1h-1v-1h-3v1h-2v1h-1v-1h-1v-1h-1v-1h-1zM1045 568h1v-2h1v1h4v-2h1v-2h1v1h1v1h1v-1h2v-3h1v2h1v-1h1v1h2v1h1v2h1v-1h1v1h4v-1h1v6h-1v-1h-1v1h-1v-1h-3v2h-1v3h-1v-3h-1v3h-1v-1h-1v-1h-1v2h-3v-1h-2v-1h-2v-2h-4v-1h-2z"/>
<path fill="#ff0000" d="M60 580h1010v1h-1010zM60 580v-2h1v1h3v3h-1v1h-1v-1h-1v1h-1zM65 580v-1h6v-1h1v1h2v-1h1v-1h2v2h2v-1h1v1h1v-2h1v2h1v-1h2v1h3v1h1v-1h2v-1h7v1h1v3h-7v1h-1v-1h-3v-1h-1v1h-1v1h-1v-1h-1v1h-1v-1h-1v1h-3v-1h-1v1h-1v1h-2v-1h-1v-1h-2v1h-1v-1h-6zM100 580v-2h1v1h4v1h1v-1h1v1h1v2h-4v1h-1v-1h-1v1h-1v-1h-1zM114 580v-1h1v3h-1zM136 580v-1h1v3h-1zM141 580h1v-1h1v-1h7v1h1v-1h1v1h1v-1h1v1h1v3h-2v1h-2v-1h-10zM157 580v-4h1v9h-1zM168 580v-3h2v-1h1v2h1v1h2v-1h3v1h2v-1h1v2h1v-1h3v-1h1v1h3v-1h5v1h4v-1h6v1h2v3h-1v1h-3v-1h-1v1h-4v-1h-3v1h-1v-1h-2v1h-4v-1h-2v-1h-3v1h-4v2h-1v-1h-8zM206 580h3v-1h8v-1h1v1h1v-1h1v1h1v1h1v-1h4v2h-1v1h-1v1h-1v-1h-3v1h-2v-1h-1v1h-1v-1h-10zM234 580v-1h1v-1h2v1h2v-1h3v1h2v1h3v-1h1v-1h1v2h1v-1h2v-1h2v1h4v2h-2v1h-6v1h-2v-1h-6v1h-3v-1h-3v1h-1v-1h-1zM265 580v-2h2v1h2v-1h1v1h1v-1h2v1h2v-1h1v1h1v-1h10v1h1v1h1v-1h1v-1h1v1h4v-1h1v1h4v2h-1v1h-6v1h-3v-1h-3v1h-1v1h-1v-2h-1v1h-1v1h-2v-1h-2v-1h-1v1h-4v-1h-1v-1h-1v1h-2v1h-2v-2h-1v1h-1v-1h-1zM301 580v-1h4v1h1v-1h1v1h1v-2h4v1h7v1h1v-1h2v2h-1v1h-5v1h-6v-1h-1v1h-1v-1h-4v-1h-1v1h-1v-1h-1zM324 580v-1h1v-1h2v-1h1v1h3v-1h2v1h1v1h1v-1h2v1h2v-1h2v1h2v-1h1v1h1v-1h3v-1h1v-3h3v-3h2v1h1v3h1v-1h1v2h1v2h2v-1h2v-1h1v2h1v1h1v-1h1v1h3v-1h1v1h1v-1h1v-2h2v2h2v1h1v-1h2v-1h1v1h1v1h2v-1h2v1h1v1h1v-1h1v-1h1v1h2v1h1v-1h3v-1h1v1h2v-1h3v1h1v-2h5v2h2v-1h1v-2h1v3h2v-1h1v1h1v-1h2v-1h2v1h1v-1h1v-2h1v2h2v-1h1v2h1v-3h1v2h1v1h1v-1h2v2h3v1h1v-2h1v1h3v-1h1v1h3v-1h2v1h7v-1h3v1h1v-1h2v1h1v-1h2v1h1v-2h1v1h2v-1h1v-1h2v1h1v-1h1v2h1v-1h1v1h4v1h1v-1h3v1h1v-1h1v1h1v-1h2v1h2v-1h1v1h1v-1h2v1h3v-1h1v1h1v1h2v-1h5v1h1v-1h3v1h1v-1h1v-1h2v-1h1v1h5v1h2v1h1v-1h2v-1h2v1h1v-2h1v1h1v-1h1v-1h1v1h2v-1h1v2h1v-1h2v1h1v-1h3v1h2v-1h2v-2h1v-1h1v-4h1v-1h1v1h1v1h1v3h1v1h1v1h2v2h3v1h1v-1h1v1h3v-1h1v1h1v-1h5v-2h2v-1h1v-1h1v2h1v2h2v-2h1v2h2v3h-1v1h-1v2h-1v-2h-3v2h-2v1h-1v-2h-1v1h-1v-2h-1v2h-1v-1h-1v-1h-4v-1h-1v1h-1v1h-1v-1h-3v1h-1v2h-1v1h-1v-1h-1v-1h-1v1h-1v2h-1v2h-2v-1h-1v-2h-1v-3h-3v1h-2v2h-1v-2h-2v-1h-1v1h-1v1h-3v-1h-1v-1h-2v-1h-1v1h-2v-1h-1v1h-1v-1h-6v2h-1v-1h-2v-1h-1v1h-3v-1h-4v-1h-1v1h-3v-1h-1v1h-1v-1h-1v1h-2v-1h-1v1h-3v1h-3v-2h-2v1h-2v1h-3v-1h-1v-1h-1v1h-2v1h-2v-1h-1v1h-3v1h-1v-1h-2v1h-1v1h-1v-1h-1v-1h-1v-1h-1v1h-2v1h-1v1h-1v-2h-5v-1h-1v1h-2v-1h-1v1h-1v-2h-1v1h-1v-1h-3v1h-1v1h-2v-2h-1v1h-4v1h-1v-1h-5v1h-2v3h-3v-2h-4v1h-2v1h-1v1h-1v-4h-1v1h-2v-2h-1v2h-1v-1h-1v1h-1v2h-1v-3h-1v1h-1v-2h-1v1h-1v3h-1v-2h-2v-1h-2v1h-2v-1h-2v-1h-8v2h-1v-1h-1v-1h-1v-1h-1v2h-1v1h-2v-1h-2v-1h-1v1h-2v-1h-3v2h-1v-1h-1v-1h-2v1h-2v-1h-2v1h-2v1h-1v-1h-1v1h-1v-1h-1v1h-1v-1h-1v2h-1v2h-1v1h-1v1h-2v-2h-1v1h-1v1h-1v-3h-1v-1h-1v-3h-3v2h-1v-1h-2v-1h-4v-1h-3v1h-1v1h-2v1h-1v-1h-1v-1h-1v1h-4v-1h-1zM579 580v-2h3v1h1v-1h3v1h3v1h1v-1h5v-1h1v2h5v-1h2v-1h2v1h1v-1h3v1h2v1h1v-1h2v1h2v2h-3v1h-1v-1h-4v1h-1v-1h-2v-1h-1v2h-2v-1h-7v1h-1v-1h-6v1h-1v-1h-2v1h-5v-1h-1zM617 580h1v-1h5v1h1v-1h2v-1h2v1h1v-1h2v2h1v-1h8v-1h1v1h1v-1h1v1h1v-1h1v1h1v-1h1v1h1v-1h3v-4h1v5h1v-5h1v6h1v2h-1v5h-1v-5h-1v3h-1v-3h-5v1h-3v-1h-2v1h-4v-1h-5v1h-3v-1h-2v1h-1v-2h-1v1h-4v-1h-3v1h-1zM667 580v-6h2v11h-2zM676 580v-2h1v5h-1zM684 580v-2h1v1h2v2h-2v1h-1zM688 580v-1h2v1h1v-1h1v1h1v-1h7v-1h2v1h2v-1h2v1h1v-1h4v1h2v-1h1v5h-6v-1h-3v1h-5v-1h-2v-1h-1v1h-9zM715 580h1v2h-1zM718 580h3v-1h1v1h2v-1h4v1h1v-1h5v-2h1v2h1v3h-1v1h-3v-1h-14zM738 580v-2h1v-1h1v1h1v1h2v-2h1v2h1v-1h2v1h3v-1h3v1h2v1h1v-1h1v-1h4v-1h1v2h3v1h1v-1h2v2h-2v1h-2v-1h-1v1h-1v1h-2v-1h-2v-1h-1v2h-1v-1h-1v-1h-1v1h-1v1h-2v-1h-4v-1h-1v1h-2v1h-1v-1h-3v1h-1v-1h-1zM777 580v-1h1v1h1v-1h4v-3h1v2h1v1h2v2h-1v1h-1v1h-1v1h-1v-2h-6zM788 580v-1h2v-1h1v4h-3zM803 580v-1h2v-2h1v1h2v1h1v-1h1v1h3v3h-3v1h-1v-1h-3v1h-1v-1h-2zM822 580v-2h2v1h1v-1h2v1h4v-3h1v3h1v3h-1v3h-1v-3h-2v-1h-1v1h-1v1h-2v-1h-1v1h-1v-1h-1zM854 580v-2h1v5h-1zM865 580v-1h1v3h-1zM869 580v-1h1v3h-1zM891 580v-1h3v-3h1v2h1v1h1v-1h2v1h1v3h-1v1h-3v-1h-1v3h-1v-3h-1v1h-2zM901 580v-1h3v1h3v-1h6v1h1v2h-3v1h-1v-1h-7v-1h-2zM916 580h1v-1h9v1h2v-1h1v-1h3v1h2v1h1v-1h1v-1h2v-1h1v1h3v1h2v-1h1v4h-1v1h-3v-1h-4v1h-1v-1h-1v1h-1v-1h-1v1h-3v-1h-8v-1h-1v1h-5zM947 580h1v2h-1zM949 580v-1h4v3h-1v1h-1v-1h-1v-1h-1zM954 580v-1h2v-3h1v4h1v-1h2v-1h1v1h3v1h1v-1h3v-2h1v2h1v-1h1v1h2v1h2v-4h1v1h2v1h2v1h2v-1h1v1h1v-1h2v1h2v-1h3v-2h1v2h1v1h3v-1h1v-1h2v1h1v2h1v-1h2v-1h1v1h2v-1h1v1h4v-1h3v1h6v-1h2v5h-3v-1h-2v-1h-3v2h-2v-1h-2v1h-2v-1h-6v1h-1v-1h-3v1h-1v-1h-1v-1h-1v2h-1v1h-1v-1h-3v-1h-2v1h-1v-1h-1v2h-1v-1h-2v1h-1v-2h-3v2h-2v1h-2v-2h-1v-1h-2v1h-4v-1h-2v-1h-1v1h-4v1h-1v-1h-3v1h-1v-2h-2zM1029 580v-1h1v-1h1v1h8v-1h4v-1h2v1h1v-1h1v2h2v1h1v2h-1v1h-2v-1h-1v-1h-1v2h-2v-1h-1v1h-1v-1h-1v1h-1v-1h-2v1h-1v-1h-2v1h-1v-1h-2v1h-1v-1h-1zM1060 580v-1h2v-2h1v2h1v-1h1v-1h1v-2h1v1h2v1h1v5h-2v2h-1v2h-1v-4h-1v1h-1v1h-1v-1h-2v-2h-1z"/>
<path fill="#12bdeb" d="M60 592h1010v1h-1010zM60 592v-2h2v1h1v1h1v-1h7v-1h1v1h1v-1h3v1h1v-1h1v1h5v-1h2v4h-6v1h-1v-1h-1v1h-3v-1h-1v1h-1v-1h-10v2h-1v-1h-1zM96 592v-1h3v1h1v-1h1v3h-2v-1h-3zM102 592v-1h9v-1h2v1h1v-1h1v1h5v-3h1v2h4v1h1v-1h1v-1h2v1h1v1h2v-1h3v-1h3v-1h1v-2h1v3h1v-1h1v3h1v-2h3v2h3v-1h2v1h2v1h1v-2h5v1h4v-1h1v1h3v-1h1v-1h1v1h1v-1h3v1h1v-1h1v1h2v1h1v-1h1v1h3v-1h2v1h1v-1h1v1h4v1h1v2h-2v-1h-1v1h-1v-1h-1v2h-2v-1h-3v-1h-1v2h-1v-1h-1v2h-1v-1h-1v1h-2v-1h-4v1h-1v-2h-2v-1h-1v1h-1v1h-3v-1h-1v1h-1v-1h-3v1h-1v-1h-1v1h-1v-1h-3v1h-1v-1h-1v-1h-1v1h-1v1h-5v1h-1v2h-1v-1h-1v-1h-3v1h-1v-1h-1v-1h-1v-1h-2v1h-1v1h-2v-1h-1v1h-2v-1h-1v-1h-2v2h-1v-1h-1v-1h-2v1h-1v-1h-1v-1h-1v2h-3v-1h-4v1h-1v-1h-1v1h-1v-1h-2v-1h-1zM192 592h1v-1h6v2h-1v1h-1v-1h-1v1h-4zM205 592v-1h1v3h-1zM212 592v-1h1v3h-1zM218 592v-2h3v1h2v-1h2v1h5v-1h1v-1h1v1h1v2h1v-1h2v3h-3v1h-5v1h-1v-1h-1v-2h-1v1h-1v1h-2v-1h-1v-1h-1v1h-2zM237 592v-1h1v1h1v-1h2v1h1v-1h1v1h1v-1h8v2h-1v1h-14zM253 592h2v2h-2zM256 592h1v2h-1zM259 592h1v2h-1zM262 592v-1h7v1h4v3h-3v-1h-1v1h-1v-1h-2v1h-1v-1h-1v1h-2zM278 592v-1h2v1h1v-1h1v1h1v-1h5v3h-8v1h-2zM306 592v-2h1v1h2v-1h1v1h5v3h-4v-1h-1v1h-4zM316 592v-1h3v-1h1v1h4v3h-1v1h-2v-1h-3v-1h-1v1h-1zM325 592h1v2h-1zM344 592v-1h1v2h-1zM347 592h2v2h-2zM350 592h1v2h-1zM355 592v-2h1v1h2v-1h3v1h3v-3h1v-3h1v2h3v1h1v1h1v-1h1v-1h1v3h1v-1h1v1h1v1h1v-2h1v1h1v1h1v-2h1v1h1v-1h2v2h1v-1h2v1h1v-2h1v1h1v-1h2v-1h1v2h1v1h3v-1h8v-2h1v3h1v-2h1v2h1v-1h1v1h1v-1h3v1h1v-1h3v1h11v-2h1v1h4v1h1v-1h1v-1h1v1h2v1h6v-1h1v-1h1v1h1v1h1v-1h2v4h-3v1h-2v-1h-1v-1h-1v1h-1v1h-2v-1h-1v-1h-1v1h-1v1h-1v-1h-3v1h-5v-1h-2v1h-2v-1h-4v-1h-1v1h-2v1h-1v-1h-1v1h-1v-1h-1v1h-1v-1h-1v1h-1v-1h-1v1h-1v1h-1v-1h-2v1h-3v-2h-1v1h-1v1h-1v-1h-1v1h-1v-1h-2v-1h-3v2h-1v-1h-6v1h-2v-1h-2v-1h-3v2h-2v-1h-2v1h-1v1h-1v-1h-1v1h-1v-2h-1v1h-1v2h-1v1h-1v-1h-1v-1h-2v-4h-1v1h-8zM453 592v-1h1v-1h3v1h1v-1h4v1h1v-1h2v1h1v2h-1v1h-1v1h-1v-1h-2v1h-2v-1h-2v1h-4zM467 592v-1h1v3h-1zM500 592v-1h2v-1h1v1h2v-1h2v1h4v-1h4v1h2v4h-2v-1h-1v1h-2v-1h-1v1h-1v-1h-1v1h-2v-1h-3v1h-1v-1h-1v1h-2zM524 592v-1h4v-1h1v1h1v-1h2v1h4v3h-1v1h-1v-1h-1v1h-1v-1h-2v1h-2v-1h-1v-1h-3zM541 592v-1h3v1h1v-1h1v-1h2v1h2v-1h1v1h1v1h1v-1h6v-1h1v1h4v3h-7v1h-1v-1h-6v1h-1v-1h-1v1h-3v-1h-4zM565 592v-1h9v-1h1v1h1v-1h2v1h1v1h1v-1h3v-1h1v1h1v-1h4v1h1v1h3v-1h2v3h-3v1h-1v-1h-4v1h-1v-1h-3v1h-1v-1h-3v1h-1v-1h-1v1h-3v-1h-7v1h-2zM596 592v-1h1v3h-1zM631 592v-1h1v3h-1zM635 592v-2h1v1h2v-1h1v1h2v1h1v-1h1v3h-8zM644 592v-1h2v3h-1v-1h-1zM648 592v-1h1v2h-1zM650 592v-1h1v2h-1zM654 592h1v-1h2v-1h2v1h2v1h1v-1h1v-1h3v1h1v-1h5v7h-1v-2h-1v-1h-5v1h-1v-1h-5v1h-4v-1h-1zM681 592v-2h1v1h4v-1h1v-1h1v1h1v1h3v3h-3v1h-2v-1h-1v-1h-1v1h-1v1h-1v-2h-2zM714 592v-1h1v-2h1v1h1v1h1v1h2v2h-1v1h-3v-2h-1v1h-1zM721 592v-2h2v1h2v-1h1v-1h1v1h3v1h5v1h1v-1h1v3h-1v1h-2v-1h-3v1h-1v-1h-1v1h-3v-1h-1v1h-1v-1h-2v-1h-1zM768 592v-1h1v3h-1zM774 592v-1h1v3h-1zM790 592v-1h6v1h1v-1h2v1h1v-1h1v3h-3v-1h-1v1h-4v-1h-2v1h-1zM806 592v-2h1v5h-1zM819 592v-1h1v-1h1v1h3v3h-5zM825 592v-1h2v-1h2v-1h1v2h3v3h-3v1h-3v-1h-2zM837 592v-2h1v1h5v-3h1v3h8v4h-1v-1h-1v1h-1v-1h-2v-1h-2v1h-1v3h-1v-3h-6zM883 592v-2h1v5h-1zM890 592v-2h2v5h-2zM899 592v-2h1v1h1v-2h1v2h1v3h-1v1h-2v-1h-1zM904 592v-1h2v3h-1v-1h-1zM908 592v-1h1v3h-1zM925 592v-2h1v5h-1zM942 592h1v-2h1v2h2v-1h2v1h2v-1h3v-1h3v1h2v-1h1v1h4v-1h1v1h6v-1h3v1h1v-1h1v1h1v4h-2v-1h-1v1h-1v1h-2v-2h-9v1h-2v-1h-1v1h-2v-1h-1v1h-2v-1h-8v1h-1v-1h-2zM987 592v-4h1v3h3v1h1v-2h2v5h-1v-1h-2v1h-1v-1h-1v1h-1v2h-1zM996 592v-3h1v2h1v-1h1v1h5v-1h1v4h-2v1h-1v-1h-3v1h-3zM1007 592v-1h2v-1h2v4h-4zM1017 592v-1h1v-1h25v1h4v-1h2v1h6v-1h1v1h1v-1h2v-2h1v2h1v6h-1v-1h-2v1h-1v-1h-1v-1h-1v1h-1v-1h-1v1h-3v-1h-2v1h-2v-1h-2v1h-1v1h-1v-1h-7v1h-1v-1h-7v1h-1v-1h-8v-1h-1zM1062 592v-1h1v1h1v-2h2v-1h1v1h1v1h1v1h1v2h-1v1h-1v1h-1v-1h-1v1h-1v-1h-1v-1h-2z"/>
<path fill="#ffff00" d="M60 604h1010v1h-1010zM60 604v-1h2v1h1v-1h2v-1h2v1h2v-1h2v-2h1v3h2v-2h2v1h1v1h2v-1h3v-3h1v2h1v1h1v-2h1v2h2v1h1v-1h4v1h1v1h1v-1h1v-1h1v1h2v-2h3v-1h1v1h1v-1h1v3h1v-1h1v1h2v-1h1v1h3v-1h2v1h2v3h-1v1h-2v-1h-1v1h-3v-1h-3v2h-1v-1h-1v1h-1v-1h-1v1h-1v1h-2v-3h-3v1h-3v-1h-3v1h-1v-1h-2v2h-1v1h-1v2h-1v-5h-1v1h-1v2h-1v-1h-1v-2h-1v1h-1v-1h-4v1h-3v-1h-12zM125 604v-1h1v-1h1v1h5v1h1v2h-3v-1h-1v1h-2v1h-1v-1h-1zM144 604v-1h4v-1h1v1h7v-1h1v1h1v-1h1v1h1v4h-1v-1h-2v1h-1v-1h-1v-1h-1v1h-1v1h-1v-1h-1v-1h-1v1h-2v1h-3v-1h-1zM185 604v-1h2v1h1v-1h6v1h1v-1h3v-1h1v1h2v-1h4v-1h3v1h1v-1h2v1h1v4h-1v1h-1v1h-2v-1h-2v-1h-2v1h-1v1h-1v-1h-1v1h-1v-1h-2v-1h-12v-1h-1zM213 604v-1h4v1h1v-1h3v-1h2v1h5v1h2v-1h3v3h-5v-1h-1v1h-1v1h-2v-1h-1v1h-1v-1h-2v1h-2v-1h-3v-1h-2zM234 604h1v-1h2v-1h1v1h2v2h-1v1h-5zM241 604v-1h5v-1h2v5h-2v-2h-1v1h-1v1h-1v-1h-1v-1h-1zM251 604h1v2h-1zM253 604v-1h6v-1h2v2h2v-1h1v-1h1v1h6v-1h2v1h1v-5h1v1h1v3h2v1h1v1h3v-1h3v-1h1v1h2v-1h1v1h1v-1h1v1h1v-1h1v1h3v-1h1v1h2v1h1v-1h5v-1h1v1h4v-1h3v1h3v-1h1v1h1v-1h3v4h-9v1h-3v-1h-3v1h-1v-1h-8v1h-2v-1h-7v1h-1v-1h-2v1h-3v-1h-4v1h-1v-2h-1v6h-1v2h-1v-6h-1v-1h-1v3h-1v-2h-1v-1h-4v-1h-1v1h-1v1h-4v-1h-1v1h-2v-1h-4zM322 604v-1h2v-1h2v1h2v-1h1v1h2v-1h1v1h1v1h1v2h-8v1h-2v-1h-1v-1h-1zM335 604v-1h4v-1h1v-1h1v1h1v1h1v-1h1v1h2v-3h1v2h1v1h1v-1h1v-1h1v2h9v1h1v-1h6v1h2v2h-4v-1h-3v1h-4v1h-1v-1h-1v1h-1v-1h-1v1h-1v-1h-1v1h-1v1h-1v-1h-2v-1h-1v2h-1v-2h-1v1h-3v-1h-2v-1h-2v1h-3zM370 604v-1h2v1h1v2h-1v-1h-1v1h-1zM374 604v-1h7v-1h4v1h3v-1h1v2h1v-1h3v-1h4v2h1v-1h3v-1h1v1h1v4h-1v1h-1v-1h-1v-1h-1v1h-4v-1h-3v1h-1v-2h-1v1h-2v1h-1v-1h-4v1h-1v-1h-8zM501 604v-2h1v1h1v1h1v-1h2v-1h1v1h2v3h-1v1h-5v-1h-2zM514 604v-1h6v-1h1v1h2v-2h1v1h1v1h1v-1h2v1h4v-1h1v1h2v-1h1v1h6v1h1v-1h6v1h1v-1h4v3h-6v1h-2v1h-1v-1h-3v1h-1v1h-1v-1h-1v-1h-1v-1h-5v1h-3v-2h-1v1h-3v1h-1v-1h-5v1h-2v-1h-2v1h-2zM581 604v-2h1v1h2v1h2v-1h2v-1h3v1h2v3h-3v1h-2v-1h-1v-1h-1v1h-4v3h-1zM607 604v-2h1v5h-1zM645 604v-1h4v-1h3v1h1v2h-1v1h-1v1h-2v-1h-1v1h-1v-1h-1v-1h-1zM663 604v-1h1v3h-1zM666 604v-2h5v1h1v1h1v-1h6v-1h1v4h-5v-1h-1v1h-3v1h-1v-1h-2v1h-2zM710 604v-1h1v3h-1zM719 604v-2h2v1h2v1h2v2h-3v1h-3zM726 604v-1h1v-1h1v1h2v1h1v-1h5v1h1v-1h1v-1h1v1h1v-1h1v1h3v1h1v-1h4v3h-2v-1h-1v1h-2v1h-1v-1h-2v2h-1v-2h-2v-1h-1v1h-1v1h-1v-1h-9zM768 604v-2h1v1h1v-2h1v-1h1v1h1v1h5v4h-2v1h-1v1h-4v-1h-1v-1h-2zM784 604v-2h1v1h1v-2h1v2h1v-1h1v1h3v3h-2v1h-5v-1h-1zM797 604v-1h1v3h-1zM801 604v-2h1v1h1v1h1v-1h1v-1h1v1h3v-1h6v4h-2v1h-4v-1h-6v1h-2zM851 604v-1h2v3h-2zM854 604v-1h3v-1h2v1h4v-1h1v1h2v3h-2v-1h-3v2h-3v-1h-4zM867 604v-1h2v-1h2v1h1v-1h1v2h1v-2h2v5h-2v-1h-1v1h-5v-1h-1zM879 604v-1h1v3h-1zM883 604v-1h1v3h-1zM896 604v-1h1v3h-1zM899 604v-1h3v4h-2v-1h-1zM905 604v-1h1v1h1v-1h5v1h1v-1h5v-1h1v1h1v1h2v-1h1v1h1v-2h1v-2h1v1h1v1h1v1h1v1h2v-1h6v-1h1v1h1v-2h1v-2h3v-2h1v-3h3v4h1v3h1v1h2v1h1v-1h2v1h3v1h1v2h-4v-1h-1v1h-1v1h-2v1h-1v1h-1v2h-1v7h-1v-4h-1v1h-1v-3h-1v-2h-2v-1h-1v1h-1v-3h-2v-1h-1v1h-1v-1h-4v1h-1v-1h-2v1h-1v2h-1v-1h-1v-1h-2v-1h-4v1h-1v-2h-1v1h-1v1h-2v-1h-2v1h-1v-1h-2v-1h-1v1h-3zM959 604v-1h4v-1h1v1h6v-1h1v1h4v-1h4v1h3v-1h1v1h3v-1h2v1h2v-2h1v1h1v1h2v-2h1v2h6v3h-2v1h-2v-1h-2v1h-1v-1h-3v1h-1v-2h-1v1h-2v1h-1v-1h-7v1h-2v-1h-1v1h-1v-1h-1v1h-2v-1h-1v1h-2v-1h-2v1h-1v-1h-3v1h-1v-1h-1v-1h-1v1h-1zM1002 604v-1h2v-1h1v1h2v1h1v-2h2v1h1v-2h2v1h2v-1h1v2h3v1h1v-2h4v1h1v1h1v-2h1v2h1v-2h4v1h1v-1h1v1h2v1h1v-1h4v-1h1v1h2v1h1v-1h2v2h-1v1h-4v1h-1v-1h-3v-1h-1v1h-1v-1h-2v1h-1v1h-1v-2h-2v1h-1v1h-1v1h-2v-1h-2v-1h-1v1h-2v-1h-3v2h-1v-2h-1v2h-1v1h-3v-2h-5v-1h-2v1h-1v-1h-1v-1h-1zM1048 604v-1h5v3h-5z"/>
<path fill="#00ff00" d="M60 616h1010v1h-1010zM89 616v-1h1v3h-1zM92 616h1v-1h1v-1h2v-1h1v1h1v1h2v-2h1v2h1v1h1v-1h2v-1h1v1h2v1h1v2h-5v-1h-1v1h-2v1h-2v1h-3v-1h-1v-1h-1v1h-1v-1h-1zM131 616v-2h1v1h1v-1h1v1h1v-1h1v1h3v-1h3v1h2v1h1v2h-3v1h-1v-1h-1v1h-1v-1h-1v-1h-1v1h-2v1h-2v-1h-2zM169 616h1v-2h3v1h1v-1h2v1h2v-1h3v4h-4v-1h-1v1h-1v-1h-1v1h-5zM203 616h1v2h-1zM237 616v-1h1v1h1v-1h3v-1h1v1h2v-1h2v1h2v1h2v-1h3v1h1v-1h1v1h2v-1h3v3h-2v-1h-1v1h-5v-1h-2v2h-1v-1h-2v1h-5v-2h-1v1h-1v1h-3v-2h-1zM264 616v-1h1v2h-1zM266 616v-1h5v2h-2v1h-3zM273 616v-1h2v1h4v2h-4v-1h-2zM285 616v-1h1v3h-1zM291 616v-1h1v3h-1zM296 616v-2h3v1h5v-1h1v1h1v-1h1v1h1v-1h1v1h3v1h1v-1h7v1h1v-1h1v-1h1v-2h1v3h1v2h-1v2h-1v-1h-3v-1h-1v1h-3v-1h-1v1h-2v1h-3v-1h-2v1h-3v-1h-4v-1h-1v1h-2v1h-2zM326 616v-1h1v-1h2v1h1v-1h2v1h4v-1h1v1h2v1h1v-1h6v-1h1v1h2v4h-1v-1h-1v1h-1v-1h-16v1h-1v-1h-3zM361 616h1v-1h1v-3h1v4h1v2h-1v2h-1v-2h-2zM366 616v-1h3v-1h1v-6h1v-8h1v5h1v1h2v-4h1v6h2v2h1v1h1v1h1v2h1v1h2v-1h2v1h4v-1h2v-1h1v2h1v-1h1v1h2v1h2v-1h8v3h-1v1h-1v-1h-3v-1h-1v1h-5v-1h-1v1h-1v1h-1v1h-1v-2h-1v1h-1v-1h-1v1h-1v-1h-1v1h-2v1h-1v-2h-2v2h-1v1h-1v1h-1v3h-1v-1h-1v1h-1v1h-1v1h-2v1h-1v3h-1v-7h-1v-6h-3v-1h-1zM408 616h1v-1h1v3h-2zM421 616v-1h6v3h-1v1h-1v-2h-2v1h-2zM430 616h1v2h-1zM432 616h1v2h-1zM434 616v-1h3v3h-2v-1h-1zM439 616h1v2h-1zM442 616v-1h1v3h-1zM450 616v-1h1v3h-1zM459 616v-1h2v1h1v-2h5v1h1v-1h1v1h1v1h1v-1h3v-1h1v1h5v2h-1v1h-2v1h-2v-1h-3v1h-1v-1h-2v1h-4v-1h-1v1h-2v-1h-3zM482 616h1v2h-1zM484 616h1v-2h1v2h1v-1h2v-1h2v1h3v-1h1v-1h2v1h2v-2h1v1h1v1h1v1h2v-1h4v1h4v-1h1v1h1v-1h6v1h2v-1h2v-1h3v2h3v1h1v-1h2v-1h3v1h7v-1h2v1h2v1h1v-2h1v1h2v3h-1v-1h-1v1h-1v1h-1v-1h-3v1h-1v-1h-2v1h-1v-1h-1v1h-2v-1h-5v1h-1v-1h-5v1h-1v1h-1v-1h-1v1h-1v-1h-1v1h-1v-1h-1v1h-1v-1h-2v-1h-1v1h-1v-2h-1v1h-2v1h-2v-1h-1v1h-5v-1h-1v2h-3v-2h-4v1h-3v-2h-1v1h-1v1h-4v-1h-2zM552 616h1v2h-1zM554 616h1v2h-1zM556 616v-1h1v1h1v2h-1v-1h-1zM560 616v-1h2v2h-2zM565 616h1v2h-1zM571 616v-1h1v3h-1zM576 616v-1h1v3h-1zM581 616v-6h1v5h6v-1h1v4h-5v1h-1v-1h-1v3h-1zM591 616v-1h1v-2h2v-1h2v1h1v1h1v1h6v-1h1v5h-1v-1h-1v-1h-1v1h-1v1h-4v-1h-1v1h-1v1h-1v1h-1v-1h-1v-2h-1zM615 616h2v-1h2v-1h2v1h1v-1h2v1h2v3h-2v1h-4v-1h-2v1h-2v-1h-1zM627 616v-1h2v-2h1v2h3v-1h3v2h1v-2h1v1h1v-1h1v-1h1v1h1v1h4v-1h1v1h1v1h1v-1h3v-1h1v3h-1v1h-9v1h-2v1h-2v-1h-2v-1h-2v1h-2v-1h-5v-1h-1zM654 616v-1h1v-1h2v2h1v-1h2v-1h1v-2h1v2h1v1h2v-2h1v1h1v1h3v3h-1v-1h-1v1h-1v1h-1v1h-1v-1h-2v-1h-1v2h-1v-1h-4v-1h-3zM671 616h1v-1h2v1h1v-1h5v3h-5v1h-1v-1h-3zM699 616h2v2h-2zM702 616v-1h8v-1h1v1h6v-3h1v4h1v-1h2v-1h1v1h3v-1h1v1h1v-1h5v1h2v1h1v2h-2v1h-2v1h-1v-2h-1v1h-1v-1h-3v1h-2v-1h-1v1h-5v-2h-1v1h-2v1h-1v-1h-2v1h-1v-1h-1v-1h-1v1h-2v-1h-1v1h-2v-1h-1zM737 616v-1h3v3h-3zM741 616v-1h1v1h2v2h-2v-1h-1zM745 616v-1h6v2h-2v1h-1v-1h-1v1h-1v-1h-1zM752 616h2v-1h1v3h-3zM766 616v-1h1v3h-1zM777 616v-1h11v1h1v3h-3v-1h-6v-1h-1v1h-2zM797 616v-1h1v3h-1zM803 616v-1h1v3h-1zM806 616v-1h4v-1h2v1h1v-1h1v1h3v-1h1v1h2v-1h1v1h5v1h1v-1h7v1h1v-1h1v-1h3v1h1v-1h4v-1h3v1h2v-1h1v2h1v-1h1v2h2v-1h2v-1h3v-1h1v1h2v-2h1v2h1v1h5v-1h1v1h1v-1h1v1h1v4h-1v-1h-2v1h-1v1h-1v-1h-1v-1h-1v1h-3v1h-1v-1h-3v1h-4v-2h-6v1h-1v1h-1v1h-2v-1h-1v-1h-3v-1h-1v1h-3v-1h-5v-1h-1v1h-1v1h-1v-1h-3v-1h-2v2h-1v-1h-2v1h-1v-1h-1v-1h-1v3h-1v-2h-1v1h-1v-1h-1v1h-2v-1h-6zM874 616v-1h1v2h-1zM877 616v-1h2v3h-2zM882 616v-1h2v1h1v-1h3v3h-5v-1h-1zM892 616v-1h3v-1h3v-1h1v1h1v1h3v-1h1v2h1v-1h2v-1h2v1h4v-1h2v1h5v1h2v-1h8v3h-3v-1h-3v1h-8v1h-1v-1h-2v1h-3v-1h-2v1h-2v-1h-3v1h-2v-1h-1v1h-3v-1h-1v1h-1v-1h-1v1h-2zM936 616h2v-2h1v1h2v1h2v-1h1v-1h1v1h1v1h1v-1h1v-1h2v1h2v-1h1v1h5v-1h4v1h2v-2h1v-1h1v1h1v-1h1v3h1v1h2v-1h2v-1h1v1h2v-1h3v1h3v1h2v-1h2v4h-2v-1h-1v1h-1v-1h-2v-1h-1v1h-2v1h-4v-1h-4v1h-1v1h-1v-1h-1v2h-1v-2h-5v2h-1v-2h-2v-1h-1v1h-1v-2h-3v1h-1v-1h-1v1h-1v1h-4v-1h-9zM991 616v-1h3v-1h1v4h-3v1h-1zM1007 616v-1h1v3h-1zM1012 616v-2h1v1h1v2h-1v1h-1zM1015 616v-1h3v-1h2v1h1v3h-1v1h-3v-1h-2zM1035 616v-1h3v-3h1v3h1v1h1v-1h3v2h-1v2h-3v-1h-1v1h-1v-1h-1v-1h-2zM1045 616v-1h6v2h-1v1h-1v-1h-1v1h-1v1h-1v-1h-1zM1054 616h1v2h-1zM1060 616h1v2h-1zM1062 616v-1h1v2h-1zM1064 616v-1h2v-1h1v1h3v4h-2v-1h-3v-1h-1z"/>
<path fill="#ff0000" d="M60 628h1010v1h-1010zM60 628v-1h2v-1h1v1h3v1h1v-1h4v-1h1v-2h1v2h2v-2h1v4h1v-2h1v-1h1v1h2v-1h2v1h1v1h1v-1h1v1h1v-1h5v1h4v-1h3v1h3v-1h1v1h1v-1h2v1h2v-1h2v1h4v2h-1v1h-1v-1h-2v1h-1v1h-1v-1h-2v1h-1v-1h-2v-1h-1v1h-1v1h-1v-1h-1v1h-2v-1h-3v-1h-4v2h-2v1h-1v-1h-1v1h-4v-2h-3v1h-2v-1h-1v2h-1v-1h-1v-2h-1v4h-1v-1h-1v-2h-4v1h-1v-1h-2v-1h-1v1h-1v1h-2zM116 628v-1h1v2h-1zM118 628v-1h1v3h-1zM122 628v-1h1v3h-1zM136 628v-1h1v3h-1zM138 628v-1h1v3h-1zM143 628v-1h1v3h-1zM153 628v-1h1v3h-1zM159 628v-1h1v3h-1zM163 628v-1h1v3h-1zM168 628v-1h1v3h-1zM172 628v-1h1v3h-1zM209 628v-1h4v-1h1v1h1v-1h1v1h4v3h-11zM228 628v-2h3v1h2v4h-1v-1h-3v1h-1zM234 628v-1h2v-1h2v5h-1v-1h-2v1h-1zM259 628v-1h1v3h-1zM304 628v-1h1v3h-1zM313 628v-1h1v1h2v-1h1v1h2v-2h2v-1h1v1h3v1h1v-1h5v1h2v3h-1v-1h-1v1h-1v1h-4v-1h-1v1h-1v1h-1v-1h-2v2h-1v-2h-1v-1h-6zM345 628v-1h1v3h-1zM350 628v-1h3v1h1v2h-4zM355 628v-1h2v1h1v-1h1v-1h1v1h1v-1h3v1h1v-1h2v1h2v4h-1v2h-1v-1h-1v-1h-4v-2h-1v2h-2v-1h-4zM370 628h2v-1h2v-1h3v4h-7zM378 628v-1h1v-1h1v1h1v1h1v-1h3v3h-1v1h-3v-1h-3zM408 628v-1h11v-1h3v4h-2v1h-2v-1h-7v1h-2v-1h-1zM435 628v-1h1v3h-1zM453 628v-1h1v3h-1zM484 628v-4h1v2h1v-1h1v1h1v1h2v-1h1v-1h1v2h1v1h2v-1h2v-1h3v-1h1v1h4v1h3v-1h3v1h3v-1h1v1h3v2h-1v1h-1v1h-2v-1h-2v2h-1v-1h-3v-1h-3v1h-1v-1h-3v1h-2v-1h-2v-1h-1v2h-2v-1h-1v1h-1v2h-1v-2h-2v1h-1v-1h-1v1h-1v-1h-2zM524 628v-2h1v1h3v-1h1v1h3v-1h1v1h3v-1h1v1h2v3h-3v-1h-1v1h-1v1h-1v-1h-3v-1h-1v1h-2v1h-3zM558 628v-1h1v3h-1zM560 628v-1h2v-1h1v1h2v-1h1v1h1v-1h3v1h1v1h1v-1h3v-1h1v1h1v1h1v-1h1v-1h1v4h-4v1h-3v-1h-1v1h-1v-1h-1v1h-2v-1h-2v1h-1v-1h-1v1h-1v-1h-2v1h-1zM588 628v-1h2v1h4v-1h2v3h-6v-1h-1v1h-1zM597 628v-1h1v-1h3v1h3v-1h1v5h-4v-1h-1v1h-2v-1h-1zM620 628v-1h5v1h2v-1h1v3h-4v1h-1v-1h-1v1h-2zM632 628v-1h1v3h-1zM639 628v-1h1v3h-1zM650 628v-2h3v1h3v3h-2v1h-4zM667 628v-1h1v3h-1zM701 628v-2h1v1h1v-2h1v2h2v-1h2v-1h1v1h3v1h1v-1h2v1h1v3h-7v1h-1v-1h-1v1h-1v-1h-3v1h-1v-1h-1zM728 628v-2h3v1h1v1h1v-1h2v-1h3v1h1v-1h1v1h1v1h1v-1h1v-1h1v1h4v1h1v-1h3v3h-5v1h-3v-1h-1v-1h-1v1h-1v1h-1v-1h-1v1h-4v-1h-1v1h-1v-1h-1v1h-2v1h-2zM816 628v-2h4v1h1v1h1v-1h3v-1h2v4h-1v1h-1v-1h-1v1h-1v-1h-3v1h-4zM829 628v-1h1v3h-1zM836 628v-1h1v3h-1zM838 628h1v-1h8v3h-2v1h-1v-2h-1v1h-1v1h-1v-1h-3zM868 628v-2h1v1h1v-3h1v9h-1v-3h-2zM872 628v-1h1v1h1v-1h1v-1h3v1h2v1h1v-1h1v-1h2v4h-4v1h-1v-1h-2v1h-1v-1h-1v-1h-1v1h-2zM885 628v-1h8v3h-1v1h-1v-1h-6zM918 628h1v-2h1v1h1v-1h1v2h1v2h-1v2h-1v-1h-1v-1h-1v1h-1zM924 628h1v-1h4v-1h1v4h-1v1h-3v-2h-1v1h-1zM974 628v-1h2v1h1v-1h1v1h1v-1h1v1h1v-1h1v-1h3v-1h2v1h2v2h1v-1h3v4h-2v1h-1v-2h-2v1h-1v-1h-2v1h-1v1h-2v-1h-1v-1h-7zM1033 628v-1h2v1h1v-1h1v-1h1v1h2v-1h3v1h2v-1h1v5h-1v-1h-1v1h-6v-1h-5zM1048 628v-1h1v1h1v2h-2zM1051 628v-1h1v2h-1zM1053 628v-1h7v2h-3v1h-3v-1h-1z"/>
<path fill="#12bdeb" d="M60 640h1010v1h-1010zM118 640v-2h2v2h4v-1h5v-1h3v1h2v-1h1v-2h1v3h1v-1h3v1h1v-1h1v1h1v4h-1v-1h-1v1h-1v-1h-4v3h-1v-3h-1v1h-1v-1h-1v1h-1v-1h-1v1h-1v-1h-1v1h-2v-1h-2v1h-1v-1h-4v1h-1zM157 640v-2h2v1h1v-1h2v1h3v-1h1v1h1v3h-1v1h-1v-2h-1v1h-2v1h-1v-1h-1v1h-1v1h-1v-3h-1zM206 640v-2h2v1h5v-1h3v1h1v-1h2v1h1v-1h1v1h3v-1h1v1h3v3h-1v1h-3v-1h-2v1h-1v1h-1v-1h-4v1h-1v-2h-3v1h-1v-1h-2v-1h-1v1h-2zM252 640h1v-1h2v-1h1v1h1v-1h2v1h4v1h1v-1h2v1h1v2h-6v1h-1v-1h-1v1h-1v-1h-3v1h-1v-2h-1v2h-1zM275 640v-1h2v-1h1v1h1v-1h1v1h1v-1h1v1h4v-1h1v1h1v-1h2v1h4v3h-2v-1h-1v1h-2v1h-2v-1h-1v1h-2v-1h-1v-1h-1v1h-1v1h-1v-1h-1v1h-1v-1h-2v1h-1zM305 640v-1h1v3h-1zM307 640v-1h1v2h-1zM309 640v-1h1v2h-1zM314 640v-2h6v1h1v-1h3v5h-1v-1h-1v-1h-2v1h-1v1h-5zM365 640v-2h1v1h2v1h1v-2h1v1h1v-1h1v1h2v-1h1v5h-1v-1h-1v1h-2v-1h-6zM389 640v-1h7v3h-2v-1h-2v1h-1v1h-1v-1h-1zM414 640v-1h3v-1h1v1h1v-1h1v1h6v-1h2v4h-6v2h-1v-1h-2v-1h-5zM449 640h1v-1h5v3h-6zM456 640v-1h1v-1h1v4h-2zM480 640v-2h1v7h-1zM489 640v-1h7v-1h1v1h1v1h1v-1h1v4h-1v-1h-1v-1h-1v1h-1v1h-2v-1h-2v1h-1v-1h-1v1h-1zM518 640v-1h1v3h-1zM525 640v-1h1v1h1v-2h1v1h2v-1h3v1h1v-1h1v1h3v-1h1v5h-1v-1h-2v-1h-1v1h-6v-1h-1v1h-3zM547 640v-1h1v1h2v-1h1v4h-1v-1h-2v1h-1zM579 640v-2h1v1h2v-1h1v-1h1v1h2v-1h2v2h2v-1h2v1h3v-1h1v1h2v3h-3v-1h-1v1h-2v1h-3v-1h-1v2h-1v-1h-2v-1h-2v1h-3v-1h-1zM682 640v-1h9v-1h1v2h1v-1h3v-2h2v1h1v1h2v-1h1v-1h3v1h1v1h2v-2h2v2h2v1h1v-1h2v1h1v2h-4v1h-2v1h-2v-1h-1v-1h-1v1h-1v1h-2v-1h-1v-1h-2v1h-1v1h-2v-2h-3v1h-1v-1h-1v1h-2v-1h-2v1h-1v-1h-2v-1h-1v1h-2zM735 640h1v-1h5v3h-1v-1h-1v1h-4zM745 640v-1h4v-1h1v1h3v-1h1v4h-6v1h-2v-1h-1zM775 640v-1h2v-1h1v1h5v1h1v-1h6v1h1v-1h4v3h-2v-1h-2v1h-3v-1h-3v1h-3v1h-1v-1h-6zM796 640v-1h1v1h1v-1h2v1h1v2h-5zM806 640v-1h1v3h-1zM808 640v-1h4v-1h1v1h2v-1h4v1h1v-1h1v5h-2v-1h-2v1h-1v-1h-2v2h-1v-1h-3v-1h-2zM835 640v-1h1v3h-1zM870 640v-2h3v1h5v1h1v-1h1v-1h2v5h-2v-1h-2v-1h-2v1h-2v1h-1v-1h-1v-1h-1v1h-1zM900 640v-1h1v2h-1zM904 640v-1h2v1h1v-1h3v3h-6zM912 640v-1h1v-1h1v1h1v-1h2v1h1v2h-1v1h-2v1h-3zM927 640v-2h2v1h2v1h1v-1h1v-1h2v1h2v4h-2v-1h-8zM969 640v-1h1v-1h3v2h1v-1h3v-1h1v1h1v-1h3v1h2v1h1v-1h8v-1h1v-1h1v2h2v-1h1v1h4v-1h1v-1h1v2h1v-1h2v1h3v3h-1v1h-1v-1h-2v1h-1v1h-1v-1h-1v1h-1v-1h-1v-1h-3v1h-1v-1h-2v1h-1v-1h-3v1h-3v-1h-1v1h-2v-1h-2v1h-2v-1h-5v1h-1v-1h-3v1h-2v-1h-1zM1020 640v-1h1v3h-1zM1045 640v-1h7v3h-6v-1h-1z"/>
<path fill="#ffff00" d="M60 652h976v1h-976zM65 652v-1h7v3h-2v-1h-1v1h-1v-1h-1v1h-2zM73 652v-1h1v1h1v2h-2zM76 652v-1h1v3h-1zM82 652v-1h2v-2h1v2h2v1h1v-2h2v1h3v1h2v-1h1v-1h1v2h1v-1h1v3h-2v1h-3v-1h-3v-1h-1v1h-1v-1h-1v1h-1v1h-1v-1h-1v1h-1v-1h-2zM100 652v-1h5v1h1v2h-2v-1h-1v1h-3zM108 652v-1h3v-2h1v2h7v-1h1v1h3v-1h4v2h1v-2h2v5h-1v-1h-2v1h-2v-1h-6v1h-1v-1h-6v1h-2v-1h-2zM138 652v-2h1v1h3v-1h1v1h1v1h1v-1h2v3h-3v1h-1v-1h-3v1h-1v-1h-1zM166 652h1v-1h4v-1h1v1h4v4h-3v-1h-7zM188 652v-1h5v1h1v-1h2v-1h1v1h1v-1h1v4h-5v1h-1v-1h-2v-1h-1v1h-1v1h-1zM204 652v-1h1v-1h1v1h4v-1h1v1h1v-1h1v-1h1v1h3v1h3v-1h1v1h2v-1h2v-1h1v6h-1v-1h-2v1h-1v1h-1v-1h-1v-1h-1v1h-8v1h-1v-1h-1v-1h-1v1h-2v-1h-1v1h-1zM240 652v-2h1v1h6v-1h1v5h-1v-1h-7zM300 652v-1h1v1h1v-1h1v-1h1v1h2v-1h1v1h1v-1h1v1h2v-1h1v1h3v2h-1v1h-1v1h-1v-1h-3v1h-2v1h-3v-1h-3v-1h-1zM330 652v-1h1v-1h3v1h1v-1h1v1h1v-1h2v1h1v-2h1v1h1v4h-1v1h-1v-1h-1v1h-2v-1h-2v1h-4v-1h-1zM350 652v-1h4v-1h1v-2h1v3h4v-1h1v1h3v3h-2v-1h-1v1h-2v-1h-1v2h-1v-1h-1v3h-1v-3h-1v-1h-3v1h-1zM376 652v-1h1v1h1v-1h1v1h1v-1h1v-1h1v1h4v-1h1v5h-6v-1h-4v-1h-1zM403 652v-1h1v3h-1zM414 652h1v-1h6v3h-7zM426 652v-2h1v-1h2v1h1v-1h1v-1h1v2h1v1h1v-1h2v-1h1v2h2v-1h1v1h2v-2h2v1h4v1h3v-1h3v-1h1v-1h1v1h1v1h2v1h2v-1h2v-1h1v6h-2v-1h-1v1h-3v1h-1v-1h-1v1h-1v-1h-2v-2h-1v1h-2v2h-1v-1h-1v-1h-1v2h-1v-1h-1v-1h-1v1h-1v1h-1v-2h-3v1h-1v1h-1v-1h-1v-1h-2v2h-2v1h-1v-1h-2v-1h-3zM476 652v-1h3v1h1v-1h1v1h1v-2h1v1h5v-1h1v4h-5v-1h-1v1h-1v1h-1v-1h-1v1h-1v-1h-1v1h-2zM551 652v-3h1v2h1v-1h1v-1h1v1h2v1h1v3h-4v1h-2v-1h-1zM579 652v-1h6v-1h3v4h-1v1h-1v-1h-3v-1h-3v1h-1zM624 652v-2h2v1h4v-1h2v1h1v-1h3v-1h1v1h1v1h1v-2h2v1h1v1h5v2h-1v1h-1v1h-2v-1h-4v-1h-1v2h-2v-1h-1v1h-2v-1h-1v1h-1v-1h-6v1h-1zM661 652v-1h6v1h1v-1h1v4h-1v-1h-1v1h-1v-1h-4v1h-1zM700 652v-2h4v-1h3v1h2v-1h1v1h2v1h1v3h-1v-1h-1v1h-1v2h-1v-1h-2v1h-3v1h-1v-2h-1v1h-1v-2h-1zM733 652v-1h3v3h-2v-1h-1zM740 652v-1h1v-2h1v1h1v-1h1v1h6v-1h5v1h1v1h2v3h-3v1h-1v1h-3v-1h-1v-1h-1v1h-2v-1h-3v2h-1v-1h-3zM781 652v-1h1v-1h1v1h1v1h1v-1h1v-1h1v1h1v-1h1v1h2v-1h1v1h1v5h-1v-1h-4v-1h-1v1h-2v-1h-3v-1h-1zM806 652v-1h1v-1h1v1h7v-1h2v-2h1v3h7v3h-7v3h-1v-3h-1v1h-1v-1h-5v1h-1v-1h-2v-1h-1zM961 652v-2h1v5h-1zM986 652h1v-1h2v1h1v2h-2v1h-1v-1h-1zM991 652h1v-2h1v1h1v1h1v-1h1v-1h1v1h5v1h1v2h-1v1h-1v-1h-7v-1h-1v2h-1v-1h-1zM1004 652v-1h3v-1h1v-1h1v1h1v1h1v-1h1v1h2v-1h1v1h2v1h1v-1h2v-2h1v2h3v-1h1v1h1v-1h5v1h5v3h-4v1h-2v-1h-5v1h-2v-1h-1v1h-2v-1h-3v1h-2v-1h-1v1h-1v-1h-2v1h-1v-1h-1v1h-4v-1h-1z"/>
<rect x="60" y="453" width="1" height="13" fill="#ffff00"/>
<rect x="61" y="460" width="1" height="1" fill="#ffff00"/>
<rect x="60" y="531" width="2" height="3" fill="#ff0000"/>
<g fill="#ffffff" font-family="'Liberation Mono', monospace" font-size="13.33" shape-rendering="geometricPrecision">
<text x="11" y="94">00:00</text><text x="1076" y="94">00:30</text>
<text x="11" y="118">01:00</text><text x="1076" y="118">01:30</text>
<text x="11" y="142">02:00</text><text x="1076" y="142">02:30</text>
<text x="11" y="166">03:00</text><text x="1076" y="166">03:30</text>
<text x="11" y="190">04:00</text><text x="1076" y="190">04:30</text>
<text x="11" y="214">05:00</text><text x="1076" y="214">05:30</text>
<text x="11" y="238">06:00</text><text x="1076" y="238">06:30</text>
<text x="11" y="262">07:00</text><text x="1076" y="262">07:30</text>
<text x="11" y="286">08:00</text><text x="1076" y="286">08:30</text>
<text x="11" y="310">09:00</text><text x="1076" y="310">09:30</text>
<text x="11" y="334">10:00</text><text x="1076" y="334">10:30</text>
<text x="11" y="358">11:00</text><text x="1076" y="358">11:30</text>
<text x="11" y="382">12:00</text><text x="1076" y="382">12:30</text>
<text x="11" y="406">13:00</text><text x="1076" y="406">13:30</text>
<text x="11" y="430">14:00</text><text x="1076" y="430">14:30</text>
<text x="11" y="454">15:00</text><text x="1076" y="454">15:30</text>
<text x="11" y="478">16:00</text><text x="1076" y="478">16:30</text>
<text x="11" y="502">17:00</text><text x="1076" y="502">17:30</text>
<text x="11" y="526">18:00</text><text x="1076" y="526">18:30</text>
<text x="11" y="550">19:00</text><text x="1076" y="550">19:30</text>
<text x="11" y="574">20:00</text><text x="1076" y="574">20:30</text>
<text x="11" y="598">21:00</text><text x="1076" y="598">21:30</text>
<text x="11" y="622">22:00</text><text x="1076" y="622">22:30</text>
<text x="11" y="646">23:00</text><text x="1076" y="646">23:30</text>
<text x="56" y="698">00</text>
<text x="89" y="698">01</text>
<text x="123" y="698">02</text>
<text x="157" y="698">03</text>
<text x="190" y="698">04</text>
<text x="224" y="698">05</text>
<text x="258" y="698">06</text>
<text x="291" y="698">07</text>
<text x="325" y="698">08</text>
<text x="359" y="698">09</text>
<text x="392" y="698">10</text>
<text x="426" y="698">11</text>
<text x="459" y="698">12</text>
<text x="493" y="698">13</text>
<text x="527" y="698">14</text>
<text x="560" y="698">15</text>
<text x="594" y="698">16</text>
<text x="628" y="698">17</text>
<text x="662" y="698">18</text>
<text x="695" y="698">19</text>
<text x="729" y="698">20</text>
<text x="763" y="698">21</text>
<text x="796" y="698">22</text>
<text x="830" y="698">23</text>
<text x="864" y="698">24</text>
<text x="897" y="698">25</text>
<text x="931" y="698">26</text>
<text x="965" y="698">27</text>
<text x="998" y="698">28</text>
<text x="1032" y="698">29</text>
<text x="1066" y="698">30</text>
</g>
<g fill="#ffffff" font-family="'Liberation Mono', monospace" font-size="10" text-anchor="end" shape-rendering="geometricPrecision">
<text x="1166" y="464">0</text>
<text x="1166" y="476">55</text>
<text x="1166" y="488">56</text>
<text x="1166" y="500">55</text>
<text x="1166" y="512">55</text>
<text x="1166" y="524">55</text>
<text x="1166" y="536">54</text>
<text x="1166" y="548">52</text>
<text x="1166" y="560">51</text>
<text x="1166" y="572">50</text>
<text x="1166" y="584">49</text>
<text x="1166" y="596">48</text>
<text x="1166" y="608">47</text>
<text x="1166" y="620">46</text>
<text x="1166" y="632">46</text>
<text x="1166" y="644">44</text>
<text x="1166" y="656">44</text>
</g>
<g fill="#ffa500" font-family="'Liberation Mono', monospace" font-size="15" shape-rendering="geometricPrecision">
<text x="150" y="48">LSCN___HHZ 01/03/2026</text>
<text x="400" y="48">Canhoba - SE - Brasil - Flt 2 15</text>
</g>
<g shape-rendering="geometricPrecision">
<!-- UFRN logo -->
<rect x="0" y="0" width="70" height="70" fill="#ffffff"/>
<path fill="#1787d3" d="M4.3 13.9H10.2V39.5C10.2 42.8 11.2 44.2 13.1 44.2C15.1 44.2 16.2 42.8 16.2 39.5V13.9H20.9V40.5C20.9 46.5 18 49.4 12.7 49.4C7.3 49.4 4.3 46.5 4.3 40.5Z"/>
<path fill="#1787d3" fill-rule="evenodd" d="M34.5 13.9H44.3C48.4 13.9 50.2 17.3 50.2 23C50.2 28.4 48.7 31.4 46.2 32.5L50.9 49.3H45.6L41.4 33.6H40.5V49.3H34.5ZM40.5 18.6H42.9C44.6 18.6 45.1 20.4 45.1 23.6C45.1 26.8 44.6 28.8 42.9 28.8H40.5Z"/>
<path fill="#1787d3" d="M50.4 13.9H55.9L61 35.5V13.9H66V49.3H60.6L55.4 27.5V49.3H50.4Z"/>
<g fill="#2b1b7a">
<rect x="22" y="11" width="12.5" height="3"/>
<rect x="32.2" y="11" width="2.3" height="10.5"/>
<rect x="25.5" y="21.2" width="7" height="6.8"/>
<rect x="25" y="34.4" width="7.5" height="15"/>
<rect x="20" y="49.3" width="12.2" height="8.9"/>
</g>
<text x="3" y="57" fill="#2b1b7a" font-family="'Liberation Sans', sans-serif" font-weight="bold" font-size="6.5" textLength="62" lengthAdjust="spacingAndGlyphs">UNIVERSIDADE FEDERAL DO RIO GRANDE DO NORTE</text>
<!-- LabSis logo -->
<rect x="970" y="0" width="150" height="65" fill="#ffffff"/>
<ellipse cx="1004.2" cy="31.9" rx="33.4" ry="31" fill="#176a98"/>
<ellipse cx="1000.2" cy="32.2" rx="28" ry="21.2" fill="#ffffff"/>
<path fill="#ffffff" d="M1028.6 12.6A32.3 29.9 0 0 1 1028.9 51.4Q1031.8 32 1028.6 12.6Z"/>
<g fill="none">
<path stroke="#1c75b5" stroke-width="1.3" d="M976 31.9H1029"/>
<path stroke="#8ec9ee" stroke-width="0.7" d="M1029 31.9H1036"/>
<path stroke="#86c2ea" stroke-width="0.9" d="M993.5 26.7V37.7M994.5 26.5V36.6M995.5 20.4V42.7M996.5 21.8V43.2M997.5 23.6V39.9M998.5 22.7V40.0M999.5 26.4V38.6M1000.5 25.9V37.6M1001.5 28.7V35.4M1002.5 28.5V35.0M1003.5 29.1V35.4M1005.5 28.7V35.5M996 20V44M998.9 22V39.3M1001.2 24.3V41.6M994.7 23.4V37.4M1005.4 27.1V36.5"/>
<path stroke="#1c75b5" stroke-width="1.05" d="M976.5 30.6V33.4M977.5 30.5V33.2M978.5 30.6V33.0M979.5 30.6V33.2M980.5 30.2V33.2M981.5 30.4V33.5M982.5 30.4V33.7M983.5 30.4V33.1M984.5 30.7V33.2M985.5 30.4V33.6M986.5 30.3V33.5M987.5 30.7V33.1M988.5 30.3V33.4M989.5 30.3V33.4M990.5 30.1V33.5M991.5 30.3V33.7M992.5 30.3V33.8M993.5 29.3V34.8M994.5 29.2V34.3M995.5 26.2V37.3M996.5 26.9V37.5M997.5 27.7V35.9M998.5 27.3V35.9M999.5 29.1V35.3M1000.5 28.9V34.8M1001.5 30.3V33.6M1002.5 30.2V33.5M1003.5 30.5V33.7M1004.5 29.3V34.6M1005.5 30.3V33.7M1006.5 29.1V34.6M1007.5 29.8V34.1M1008.5 30.0V33.8M1009.5 30.6V33.2M1010.5 30.4V33.4M1011.5 30.7V33.3M1012.5 30.4V33.6M1013.5 30.2V33.6M1014.5 30.5V33.7M1015.5 30.1V33.7M1016.5 30.7V33.0M1017.5 30.7V33.1M1018.5 31.0V32.9M1019.5 31.1V32.7M1020.5 31.0V32.7M1021.5 30.6V33.0M1022.5 31.1V32.7M1023.5 31.1V32.8M1024.5 31.0V32.7M1025.5 31.3V32.5M1026.5 31.1V32.7M1027.5 31.0V32.7"/>
</g>
<text x="1052.8" y="28.6" fill="#5f735f" stroke="#5f735f" stroke-width="0.3" font-family="'Liberation Sans', sans-serif" font-size="24" textLength="64.4" lengthAdjust="spacingAndGlyphs">LabSis</text>
<rect x="1052.8" y="32" width="65.2" height="1" fill="#8a6aa8"/>
<text x="1052.1" y="50.7" fill="#5f735f" stroke="#5f735f" stroke-width="0.2" font-family="'Liberation Sans', sans-serif" font-size="18.2" textLength="42.1" lengthAdjust="spacingAndGlyphs">UFRN</text>
</g>

</svg>
<div class="tl"><span style="left:150px;top:35px;font-size:15px;font-family:"Liberation Mono",monospace;">LSCN___HHZ 01/03/2026</span><span style="left:400px;top:35px;font-size:15px;font-family:"Liberation Mono",monospace;">Canhoba - SE - Brasil - Flt 2 15</span><span style="left:11px;top:82px;font-size:13.33px;font-family:"Liberation Mono",monospace;">00:00</span><span style="left:1076px;top:82px;font-size:13.33px;font-family:"Liberation Mono",monospace;">00:30</span><span style="left:11px;top:106px;font-size:13.33px;font-family:"Liberation Mono",monospace;">01:00</span><span style="left:1076px;top:106px;font-size:13.33px;font-family:"Liberation Mono",monospace;">01:30</span><span style="left:11px;top:130px;font-size:13.33px;font-family:"Liberation Mono",monospace;">02:00</span><span style="left:1076px;top:130px;font-size:13.33px;font-family:"Liberation Mono",monospace;">02:30</span><span style="left:11px;top:154px;font-size:13.33px;font-family:"Liberation Mono",monospace;">03:00</span><span style="left:1076px;top:154px;font-size:13.33px;font-family:"Liberation Mono",monospace;">03:30</span><span style="left:11px;top:178px;font-size:13.33px;font-family:"Liberation Mono",monospace;">04:00</span><span style="left:1076px;top:178px;font-size:13.33px;font-family:"Liberation Mono",monospace;">04:30</span><span style="left:11px;top:202px;font-size:13.33px;font-family:"Liberation Mono",monospace;">05:00</span><span style="left:1076px;top:202px;font-size:13.33px;font-family:"Liberation Mono",monospace;">05:30</span><span style="left:11px;top:226px;font-size:13.33px;font-family:"Liberation Mono",monospace;">06:00</span><span style="left:1076px;top:226px;font-size:13.33px;font-family:"Liberation Mono",monospace;">06:30</span><span style="left:11px;top:250px;font-size:13.33px;font-family:"Liberation Mono",monospace;">07:00</span><span style="left:1076px;top:250px;font-size:13.33px;font-family:"Liberation Mono",monospace;">07:30</span><span style="left:11px;top:274px;font-size:13.33px;font-family:"Liberation Mono",monospace;">08:00</span><span style="left:1076px;top:274px;font-size:13.33px;font-family:"Liberation Mono",monospace;">08:30</span><span style="left:11px;top:298px;font-size:13.33px;font-family:"Liberation Mono",monospace;">09:00</span><span style="left:1076px;top:298px;font-size:13.33px;font-family:"Liberation Mono",monospace;">09:30</span><span style="left:11px;top:322px;font-size:13.33px;font-family:"Liberation Mono",monospace;">10:00</span><span style="left:1076px;top:322px;font-size:13.33px;font-family:"Liberation Mono",monospace;">10:30</span><span style="left:11px;top:346px;font-size:13.33px;font-family:"Liberation Mono",monospace;">11:00</span><span style="left:1076px;top:346px;font-size:13.33px;font-family:"Liberation Mono",monospace;">11:30</span><span style="left:11px;top:370px;font-size:13.33px;font-family:"Liberation Mono",monospace;">12:00</span><span style="left:1076px;top:370px;font-size:13.33px;font-family:"Liberation Mono",monospace;">12:30</span><span style="left:11px;top:394px;font-size:13.33px;font-family:"Liberation Mono",monospace;">13:00</span><span style="left:1076px;top:394px;font-size:13.33px;font-family:"Liberation Mono",monospace;">13:30</span><span style="left:11px;top:418px;font-size:13.33px;font-family:"Liberation Mono",monospace;">14:00</span><span style="left:1076px;top:418px;font-size:13.33px;font-family:"Liberation Mono",monospace;">14:30</span><span style="left:11px;top:442px;font-size:13.33px;font-family:"Liberation Mono",monospace;">15:00</span><span style="left:1076px;top:442px;font-size:13.33px;font-family:"Liberation Mono",monospace;">15:30</span><span style="left:11px;top:466px;font-size:13.33px;font-family:"Liberation Mono",monospace;">16:00</span><span style="left:1076px;top:466px;font-size:13.33px;font-family:"Liberation Mono",monospace;">16:30</span><span style="left:11px;top:490px;font-size:13.33px;font-family:"Liberation Mono",monospace;">17:00</span><span style="left:1076px;top:490px;font-size:13.33px;font-family:"Liberation Mono",monospace;">17:30</span><span style="left:11px;top:514px;font-size:13.33px;font-family:"Liberation Mono",monospace;">18:00</span><span style="left:1076px;top:514px;font-size:13.33px;font-family:"Liberation Mono",monospace;">18:30</span><span style="left:11px;top:538px;font-size:13.33px;font-family:"Liberation Mono",monospace;">19:00</span><span style="left:1076px;top:538px;font-size:13.33px;font-family:"Liberation Mono",monospace;">19:30</span><span style="left:11px;top:562px;font-size:13.33px;font-family:"Liberation Mono",monospace;">20:00</span><span style="left:1076px;top:562px;font-size:13.33px;font-family:"Liberation Mono",monospace;">20:30</span><span style="left:11px;top:586px;font-size:13.33px;font-family:"Liberation Mono",monospace;">21:00</span><span style="left:1076px;top:586px;font-size:13.33px;font-family:"Liberation Mono",monospace;">21:30</span><span style="left:11px;top:610px;font-size:13.33px;font-family:"Liberation Mono",monospace;">22:00</span><span style="left:1076px;top:610px;font-size:13.33px;font-family:"Liberation Mono",monospace;">22:30</span><span style="left:11px;top:634px;font-size:13.33px;font-family:"Liberation Mono",monospace;">23:00</span><span style="left:1076px;top:634px;font-size:13.33px;font-family:"Liberation Mono",monospace;">23:30</span><span style="left:56px;top:686px;font-size:13.33px;font-family:"Liberation Mono",monospace;">00</span><span style="left:89px;top:686px;font-size:13.33px;font-family:"Liberation Mono",monospace;">01</span><span style="left:123px;top:686px;font-size:13.33px;font-family:"Liberation Mono",monospace;">02</span><span style="left:157px;top:686px;font-size:13.33px;font-family:"Liberation Mono",monospace;">03</span><span style="left:190px;top:686px;font-size:13.33px;font-family:"Liberation Mono",monospace;">04</span><span style="left:224px;top:686px;font-size:13.33px;font-family:"Liberation Mono",monospace;">05</span><span style="left:258px;top:686px;font-size:13.33px;font-family:"Liberation Mono",monospace;">06</span><span style="left:291px;top:686px;font-size:13.33px;font-family:"Liberation Mono",monospace;">07</span><span style="left:325px;top:686px;font-size:13.33px;font-family:"Liberation Mono",monospace;">08</span><span style="left:359px;top:686px;font-size:13.33px;font-family:"Liberation Mono",monospace;">09</span><span style="left:392px;top:686px;font-size:13.33px;font-family:"Liberation Mono",monospace;">10</span><span style="left:426px;top:686px;font-size:13.33px;font-family:"Liberation Mono",monospace;">11</span><span style="left:459px;top:686px;font-size:13.33px;font-family:"Liberation Mono",monospace;">12</span><span style="left:493px;top:686px;font-size:13.33px;font-family:"Liberation Mono",monospace;">13</span><span style="left:527px;top:686px;font-size:13.33px;font-family:"Liberation Mono",monospace;">14</span><span style="left:560px;top:686px;font-size:13.33px;font-family:"Liberation Mono",monospace;">15</span><span style="left:594px;top:686px;font-size:13.33px;font-family:"Liberation Mono",monospace;">16</span><span style="left:628px;top:686px;font-size:13.33px;font-family:"Liberation Mono",monospace;">17</span><span style="left:662px;top:686px;font-size:13.33px;font-family:"Liberation Mono",monospace;">18</span><span style="left:695px;top:686px;font-size:13.33px;font-family:"Liberation Mono",monospace;">19</span><span style="left:729px;top:686px;font-size:13.33px;font-family:"Liberation Mono",monospace;">20</span><span style="left:763px;top:686px;font-size:13.33px;font-family:"Liberation Mono",monospace;">21</span><span style="left:796px;top:686px;font-size:13.33px;font-family:"Liberation Mono",monospace;">22</span><span style="left:830px;top:686px;font-size:13.33px;font-family:"Liberation Mono",monospace;">23</span><span style="left:864px;top:686px;font-size:13.33px;font-family:"Liberation Mono",monospace;">24</span><span style="left:897px;top:686px;font-size:13.33px;font-family:"Liberation Mono",monospace;">25</span><span style="left:931px;top:686px;font-size:13.33px;font-family:"Liberation Mono",monospace;">26</span><span style="left:965px;top:686px;font-size:13.33px;font-family:"Liberation Mono",monospace;">27</span><span style="left:998px;top:686px;font-size:13.33px;font-family:"Liberation Mono",monospace;">28</span><span style="left:1032px;top:686px;font-size:13.33px;font-family:"Liberation Mono",monospace;">29</span><span style="left:1066px;top:686px;font-size:13.33px;font-family:"Liberation Mono",monospace;">30</span><span style="left:1141px;top:454px;font-size:10px;font-family:"Liberation Mono",monospace;width:24px;text-align:right;">0</span><span style="left:1141px;top:466px;font-size:10px;font-family:"Liberation Mono",monospace;width:24px;text-align:right;">55</span><span style="left:1141px;top:478px;font-size:10px;font-family:"Liberation Mono",monospace;width:24px;text-align:right;">56</span><span style="left:1141px;top:490px;font-size:10px;font-family:"Liberation Mono",monospace;width:24px;text-align:right;">55</span><span style="left:1141px;top:502px;font-size:10px;font-family:"Liberation Mono",monospace;width:24px;text-align:right;">55</span><span style="left:1141px;top:514px;font-size:10px;font-family:"Liberation Mono",monospace;width:24px;text-align:right;">55</span><span style="left:1141px;top:526px;font-size:10px;font-family:"Liberation Mono",monospace;width:24px;text-align:right;">54</span><span style="left:1141px;top:538px;font-size:10px;font-family:"Liberation Mono",monospace;width:24px;text-align:right;">52</span><span style="left:1141px;top:550px;font-size:10px;font-family:"Liberation Mono",monospace;width:24px;text-align:right;">51</span><span style="left:1141px;top:562px;font-size:10px;font-family:"Liberation Mono",monospace;width:24px;text-align:right;">50</span><span style="left:1141px;top:574px;font-size:10px;font-family:"Liberation Mono",monospace;width:24px;text-align:right;">49</span><span style="left:1141px;top:586px;font-size:10px;font-family:"Liberation Mono",monospace;width:24px;text-align:right;">48</span><span style="left:1141px;top:598px;font-size:10px;font-family:"Liberation Mono",monospace;width:24px;text-align:right;">47</span><span style="left:1141px;top:610px;font-size:10px;font-family:"Liberation Mono",monospace;width:24px;text-align:right;">46</span><span style="left:1141px;top:622px;font-size:10px;font-family:"Liberation Mono",monospace;width:24px;text-align:right;">46</span><span style="left:1141px;top:634px;font-size:10px;font-family:"Liberation Mono",monospace;width:24px;text-align:right;">44</span><span style="left:1141px;top:646px;font-size:10px;font-family:"Liberation Mono",monospace;width:24px;text-align:right;">44</span><span style="left:4px;top:12px;font-size:40px;font-family:"Liberation Sans",monospace;">UFRN</span><span style="left:3px;top:51px;font-size:2.6px;font-family:"Liberation Sans",monospace;">UNIVERSIDADE FEDERAL DO RIO GRANDE DO NORTE</span><span style="left:1052px;top:6px;font-size:22px;font-family:"Liberation Sans",monospace;">LabSis</span><span style="left:1052px;top:34px;font-size:16px;font-family:"Liberation Sans",monospace;">UFRN</span></div>
</body>
</html>
